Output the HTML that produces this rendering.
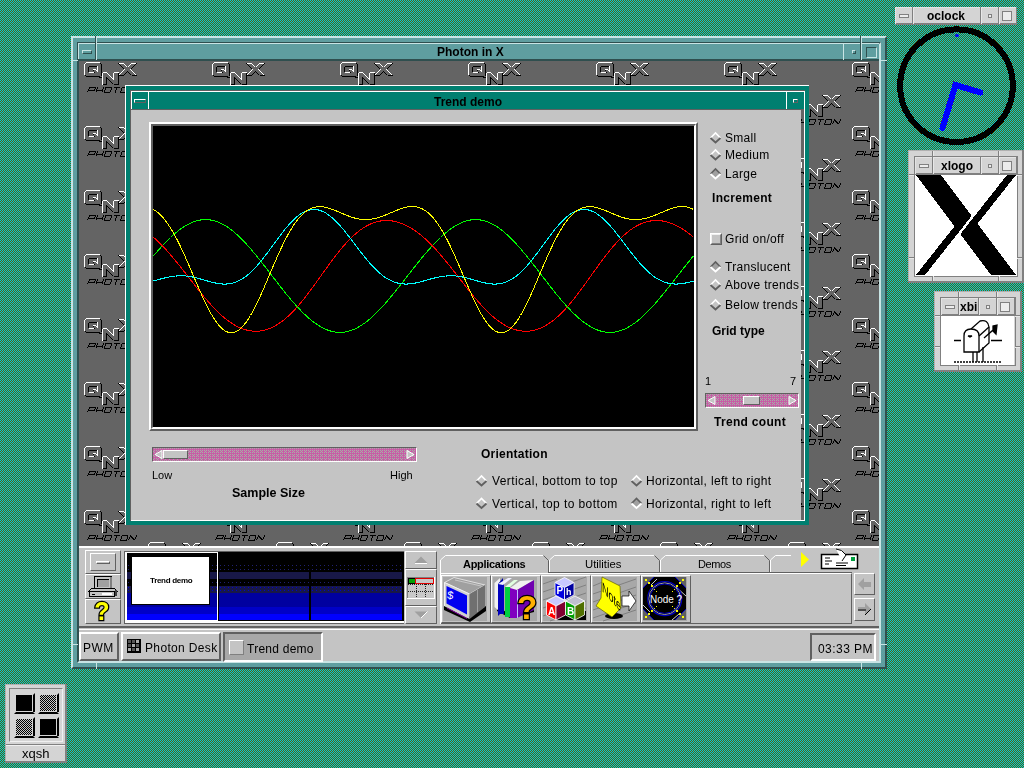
<!DOCTYPE html><html><head><meta charset="utf-8"><style>
html,body{margin:0;padding:0;}
body{width:1024px;height:768px;overflow:hidden;position:relative;
background:repeating-conic-gradient(#586010 0 25%, #00ccdc 0 50%) 0 0/2px 2px;
font-family:"Liberation Sans",sans-serif;}
.a{position:absolute;box-sizing:content-box;}
.t{white-space:nowrap;line-height:1;color:#000;will-change:transform;}
.b{font-weight:bold;}
svg{position:absolute;overflow:visible;}
</style></head><body>
<div class="a" style="left:71px;top:36px;width:812px;height:629px;border:2px solid;border-color:#c8e4e4 #2f4f4f #2f4f4f #c8e4e4;background:#5f9ea0;"></div>
<div class="a" style="left:77px;top:42px;width:800px;height:617px;border:2px solid;border-color:#2f4f4f #c8e4e4 #c8e4e4 #2f4f4f;"></div>
<div class="a" style="left:79px;top:44px;width:800px;height:15px;background:#5f9ea0;"></div>
<div class="a" style="left:78px;top:43px;width:801px;height:1px;background:#c8e4e4;"></div>
<div class="a" style="left:78px;top:43px;width:1px;height:17px;background:#c8e4e4;"></div>
<div class="a" style="left:78px;top:59px;width:801px;height:2px;background:#2f4f4f;"></div>
<div class="a" style="left:95px;top:36px;width:1px;height:24px;background:#2f4f4f;"></div>
<div class="a" style="left:96px;top:36px;width:1px;height:24px;background:#c8e4e4;"></div>
<div class="a" style="left:82px;top:50px;width:10px;height:4px;box-sizing:border-box;border:1px solid;border-color:#c8e4e4 #2f4f4f #2f4f4f #c8e4e4;"></div>
<div class="a" style="left:843px;top:43px;width:1px;height:17px;background:#c8e4e4;"></div>
<div class="a" style="left:860px;top:36px;width:1px;height:24px;background:#2f4f4f;"></div>
<div class="a" style="left:861px;top:36px;width:1px;height:24px;background:#c8e4e4;"></div>
<div class="a" style="left:852px;top:50px;width:4px;height:4px;box-sizing:border-box;border:1px solid;border-color:#c8e4e4 #2f4f4f #2f4f4f #c8e4e4;"></div>
<div class="a" style="left:866px;top:47px;width:11px;height:11px;box-sizing:border-box;border:1px solid;border-color:#2f4f4f #c8e4e4 #c8e4e4 #2f4f4f;"></div>
<div class="a" style="left:71px;top:60px;width:7px;height:1px;background:#c8e4e4;"></div>
<div class="a" style="left:879px;top:60px;width:8px;height:1px;background:#c8e4e4;"></div>
<div class="a" style="left:71px;top:644px;width:7px;height:1px;background:#c8e4e4;"></div>
<div class="a" style="left:879px;top:644px;width:8px;height:1px;background:#c8e4e4;"></div>
<div class="a" style="left:96px;top:662px;width:1px;height:7px;background:#c8e4e4;"></div>
<div class="a" style="left:861px;top:662px;width:1px;height:7px;background:#c8e4e4;"></div>
<div class="a t" style="left:437px;top:46px;font-size:12px;font-weight:bold;">Photon in X</div>
<svg width="1024" height="768" style="left:0;top:0"><defs><pattern id="qnx" x="79" y="61" width="128" height="64" patternUnits="userSpaceOnUse"><rect width="128" height="64" fill="#646464"/><g shape-rendering="crispEdges" stroke-width="1"><rect x="7" y="1" width="14" height="1" fill="#ffffff"/><rect x="6" y="2" width="1" height="1" fill="#ffffff"/><rect x="5" y="3" width="1" height="11" fill="#ffffff"/><rect x="21" y="2" width="1" height="1" fill="#000000"/><rect x="22" y="3" width="1" height="12" fill="#000000"/><rect x="7" y="15" width="14" height="1" fill="#000000"/><rect x="6" y="14" width="1" height="1" fill="#000000"/><rect x="20" y="16" width="3" height="1" fill="#000000"/><rect x="10" y="5" width="8" height="1" fill="#000000"/><rect x="9" y="6" width="1" height="5" fill="#000000"/><rect x="10" y="11" width="5" height="1" fill="#ffffff"/><rect x="18" y="5" width="1" height="6" fill="#ffffff"/><rect x="14" y="8" width="3" height="1" fill="#ffffff"/><rect x="17" y="9" width="1" height="1" fill="#ffffff"/><rect x="18" y="10" width="1" height="1" fill="#ffffff"/><rect x="14" y="9" width="1" height="1" fill="#000000"/><rect x="15" y="11" width="1" height="1" fill="#000000"/><line x1="23.5" y1="11.5" x2="27.5" y2="11.5" stroke="#ffffff"/><line x1="27.5" y1="11.5" x2="34.5" y2="18.5" stroke="#ffffff"/><line x1="34.5" y1="18.5" x2="34.5" y2="11.5" stroke="#ffffff"/><line x1="34.5" y1="11.5" x2="39.5" y2="11.5" stroke="#ffffff"/><line x1="39.5" y1="11.5" x2="39.5" y2="23.5" stroke="#000000"/><line x1="39.5" y1="23.5" x2="34.5" y2="23.5" stroke="#000000"/><line x1="34.5" y1="23.5" x2="27.5" y2="16.5" stroke="#000000"/><line x1="27.5" y1="16.5" x2="27.5" y2="23.5" stroke="#000000"/><line x1="27.5" y1="23.5" x2="23.5" y2="23.5" stroke="#000000"/><line x1="23.5" y1="23.5" x2="23.5" y2="11.5" stroke="#ffffff"/><line x1="39.5" y1="2.5" x2="44.5" y2="2.5" stroke="#ffffff"/><line x1="44.5" y1="2.5" x2="48.5" y2="6.5" stroke="#ffffff"/><line x1="48.5" y1="6.5" x2="52.5" y2="2.5" stroke="#ffffff"/><line x1="52.5" y1="2.5" x2="57.5" y2="2.5" stroke="#ffffff"/><line x1="57.5" y1="2.5" x2="51.5" y2="8.5" stroke="#000000"/><line x1="51.5" y1="8.5" x2="57.5" y2="14.5" stroke="#ffffff"/><line x1="57.5" y1="14.5" x2="52.5" y2="14.5" stroke="#000000"/><line x1="52.5" y1="14.5" x2="48.5" y2="10.5" stroke="#000000"/><line x1="48.5" y1="10.5" x2="44.5" y2="14.5" stroke="#000000"/><line x1="44.5" y1="14.5" x2="39.5" y2="14.5" stroke="#000000"/><line x1="39.5" y1="14.5" x2="45.5" y2="8.5" stroke="#ffffff"/><line x1="45.5" y1="8.5" x2="39.5" y2="2.5" stroke="#000000"/><path d="M10.50,26.50L16.50,26.50M16.50,26.50L15.30,29.50M9.30,29.50L15.30,29.50M10.50,26.50L8.50,31.50M18.70,26.50L16.70,31.50M24.70,26.50L22.70,31.50M17.50,29.50L23.50,29.50M26.90,26.50L32.90,26.50M32.90,26.50L30.90,31.50M24.90,31.50L30.90,31.50M26.90,26.50L24.90,31.50M35.10,26.50L41.10,26.50M38.10,26.50L36.10,31.50M43.30,26.50L49.30,26.50M49.30,26.50L47.30,31.50M41.30,31.50L47.30,31.50M43.30,26.50L41.30,31.50M51.50,26.50L49.50,31.50M57.50,26.50L55.50,31.50M51.50,26.50L55.50,31.50" stroke="#000" stroke-width="1" fill="none"/><rect x="71" y="33" width="14" height="1" fill="#ffffff"/><rect x="70" y="34" width="1" height="1" fill="#ffffff"/><rect x="69" y="35" width="1" height="11" fill="#ffffff"/><rect x="85" y="34" width="1" height="1" fill="#000000"/><rect x="86" y="35" width="1" height="12" fill="#000000"/><rect x="71" y="47" width="14" height="1" fill="#000000"/><rect x="70" y="46" width="1" height="1" fill="#000000"/><rect x="84" y="48" width="3" height="1" fill="#000000"/><rect x="74" y="37" width="8" height="1" fill="#000000"/><rect x="73" y="38" width="1" height="5" fill="#000000"/><rect x="74" y="43" width="5" height="1" fill="#ffffff"/><rect x="82" y="37" width="1" height="6" fill="#ffffff"/><rect x="78" y="40" width="3" height="1" fill="#ffffff"/><rect x="81" y="41" width="1" height="1" fill="#ffffff"/><rect x="82" y="42" width="1" height="1" fill="#ffffff"/><rect x="78" y="41" width="1" height="1" fill="#000000"/><rect x="79" y="43" width="1" height="1" fill="#000000"/><line x1="87.5" y1="43.5" x2="91.5" y2="43.5" stroke="#ffffff"/><line x1="91.5" y1="43.5" x2="98.5" y2="50.5" stroke="#ffffff"/><line x1="98.5" y1="50.5" x2="98.5" y2="43.5" stroke="#ffffff"/><line x1="98.5" y1="43.5" x2="103.5" y2="43.5" stroke="#ffffff"/><line x1="103.5" y1="43.5" x2="103.5" y2="55.5" stroke="#000000"/><line x1="103.5" y1="55.5" x2="98.5" y2="55.5" stroke="#000000"/><line x1="98.5" y1="55.5" x2="91.5" y2="48.5" stroke="#000000"/><line x1="91.5" y1="48.5" x2="91.5" y2="55.5" stroke="#000000"/><line x1="91.5" y1="55.5" x2="87.5" y2="55.5" stroke="#000000"/><line x1="87.5" y1="55.5" x2="87.5" y2="43.5" stroke="#ffffff"/><line x1="103.5" y1="34.5" x2="108.5" y2="34.5" stroke="#ffffff"/><line x1="108.5" y1="34.5" x2="112.5" y2="38.5" stroke="#ffffff"/><line x1="112.5" y1="38.5" x2="116.5" y2="34.5" stroke="#ffffff"/><line x1="116.5" y1="34.5" x2="121.5" y2="34.5" stroke="#ffffff"/><line x1="121.5" y1="34.5" x2="115.5" y2="40.5" stroke="#000000"/><line x1="115.5" y1="40.5" x2="121.5" y2="46.5" stroke="#ffffff"/><line x1="121.5" y1="46.5" x2="116.5" y2="46.5" stroke="#000000"/><line x1="116.5" y1="46.5" x2="112.5" y2="42.5" stroke="#000000"/><line x1="112.5" y1="42.5" x2="108.5" y2="46.5" stroke="#000000"/><line x1="108.5" y1="46.5" x2="103.5" y2="46.5" stroke="#000000"/><line x1="103.5" y1="46.5" x2="109.5" y2="40.5" stroke="#ffffff"/><line x1="109.5" y1="40.5" x2="103.5" y2="34.5" stroke="#000000"/><path d="M74.50,58.50L80.50,58.50M80.50,58.50L79.30,61.50M73.30,61.50L79.30,61.50M74.50,58.50L72.50,63.50M82.70,58.50L80.70,63.50M88.70,58.50L86.70,63.50M81.50,61.50L87.50,61.50M90.90,58.50L96.90,58.50M96.90,58.50L94.90,63.50M88.90,63.50L94.90,63.50M90.90,58.50L88.90,63.50M99.10,58.50L105.10,58.50M102.10,58.50L100.10,63.50M107.30,58.50L113.30,58.50M113.30,58.50L111.30,63.50M105.30,63.50L111.30,63.50M107.30,58.50L105.30,63.50M115.50,58.50L113.50,63.50M121.50,58.50L119.50,63.50M115.50,58.50L119.50,63.50" stroke="#000" stroke-width="1" fill="none"/><rect x="-57" y="33" width="14" height="1" fill="#ffffff"/><rect x="-58" y="34" width="1" height="1" fill="#ffffff"/><rect x="-59" y="35" width="1" height="11" fill="#ffffff"/><rect x="-43" y="34" width="1" height="1" fill="#000000"/><rect x="-42" y="35" width="1" height="12" fill="#000000"/><rect x="-57" y="47" width="14" height="1" fill="#000000"/><rect x="-58" y="46" width="1" height="1" fill="#000000"/><rect x="-44" y="48" width="3" height="1" fill="#000000"/><rect x="-54" y="37" width="8" height="1" fill="#000000"/><rect x="-55" y="38" width="1" height="5" fill="#000000"/><rect x="-54" y="43" width="5" height="1" fill="#ffffff"/><rect x="-46" y="37" width="1" height="6" fill="#ffffff"/><rect x="-50" y="40" width="3" height="1" fill="#ffffff"/><rect x="-47" y="41" width="1" height="1" fill="#ffffff"/><rect x="-46" y="42" width="1" height="1" fill="#ffffff"/><rect x="-50" y="41" width="1" height="1" fill="#000000"/><rect x="-49" y="43" width="1" height="1" fill="#000000"/><line x1="-40.5" y1="43.5" x2="-36.5" y2="43.5" stroke="#ffffff"/><line x1="-36.5" y1="43.5" x2="-29.5" y2="50.5" stroke="#ffffff"/><line x1="-29.5" y1="50.5" x2="-29.5" y2="43.5" stroke="#ffffff"/><line x1="-29.5" y1="43.5" x2="-24.5" y2="43.5" stroke="#ffffff"/><line x1="-24.5" y1="43.5" x2="-24.5" y2="55.5" stroke="#000000"/><line x1="-24.5" y1="55.5" x2="-29.5" y2="55.5" stroke="#000000"/><line x1="-29.5" y1="55.5" x2="-36.5" y2="48.5" stroke="#000000"/><line x1="-36.5" y1="48.5" x2="-36.5" y2="55.5" stroke="#000000"/><line x1="-36.5" y1="55.5" x2="-40.5" y2="55.5" stroke="#000000"/><line x1="-40.5" y1="55.5" x2="-40.5" y2="43.5" stroke="#ffffff"/><line x1="-24.5" y1="34.5" x2="-19.5" y2="34.5" stroke="#ffffff"/><line x1="-19.5" y1="34.5" x2="-15.5" y2="38.5" stroke="#ffffff"/><line x1="-15.5" y1="38.5" x2="-11.5" y2="34.5" stroke="#ffffff"/><line x1="-11.5" y1="34.5" x2="-6.5" y2="34.5" stroke="#ffffff"/><line x1="-6.5" y1="34.5" x2="-12.5" y2="40.5" stroke="#000000"/><line x1="-12.5" y1="40.5" x2="-6.5" y2="46.5" stroke="#ffffff"/><line x1="-6.5" y1="46.5" x2="-11.5" y2="46.5" stroke="#000000"/><line x1="-11.5" y1="46.5" x2="-15.5" y2="42.5" stroke="#000000"/><line x1="-15.5" y1="42.5" x2="-19.5" y2="46.5" stroke="#000000"/><line x1="-19.5" y1="46.5" x2="-24.5" y2="46.5" stroke="#000000"/><line x1="-24.5" y1="46.5" x2="-18.5" y2="40.5" stroke="#ffffff"/><line x1="-18.5" y1="40.5" x2="-24.5" y2="34.5" stroke="#000000"/><path d="M-53.50,58.50L-47.50,58.50M-47.50,58.50L-48.70,61.50M-54.70,61.50L-48.70,61.50M-53.50,58.50L-55.50,63.50M-45.30,58.50L-47.30,63.50M-39.30,58.50L-41.30,63.50M-46.50,61.50L-40.50,61.50M-37.10,58.50L-31.10,58.50M-31.10,58.50L-33.10,63.50M-39.10,63.50L-33.10,63.50M-37.10,58.50L-39.10,63.50M-28.90,58.50L-22.90,58.50M-25.90,58.50L-27.90,63.50M-20.70,58.50L-14.70,58.50M-14.70,58.50L-16.70,63.50M-22.70,63.50L-16.70,63.50M-20.70,58.50L-22.70,63.50M-12.50,58.50L-14.50,63.50M-6.50,58.50L-8.50,63.50M-12.50,58.50L-8.50,63.50" stroke="#000" stroke-width="1" fill="none"/><rect x="7" y="-31" width="14" height="1" fill="#ffffff"/><rect x="6" y="-30" width="1" height="1" fill="#ffffff"/><rect x="5" y="-29" width="1" height="11" fill="#ffffff"/><rect x="21" y="-30" width="1" height="1" fill="#000000"/><rect x="22" y="-29" width="1" height="12" fill="#000000"/><rect x="7" y="-17" width="14" height="1" fill="#000000"/><rect x="6" y="-18" width="1" height="1" fill="#000000"/><rect x="20" y="-16" width="3" height="1" fill="#000000"/><rect x="10" y="-27" width="8" height="1" fill="#000000"/><rect x="9" y="-26" width="1" height="5" fill="#000000"/><rect x="10" y="-21" width="5" height="1" fill="#ffffff"/><rect x="18" y="-27" width="1" height="6" fill="#ffffff"/><rect x="14" y="-24" width="3" height="1" fill="#ffffff"/><rect x="17" y="-23" width="1" height="1" fill="#ffffff"/><rect x="18" y="-22" width="1" height="1" fill="#ffffff"/><rect x="14" y="-23" width="1" height="1" fill="#000000"/><rect x="15" y="-21" width="1" height="1" fill="#000000"/><line x1="23.5" y1="-20.5" x2="27.5" y2="-20.5" stroke="#ffffff"/><line x1="27.5" y1="-20.5" x2="34.5" y2="-13.5" stroke="#ffffff"/><line x1="34.5" y1="-13.5" x2="34.5" y2="-20.5" stroke="#ffffff"/><line x1="34.5" y1="-20.5" x2="39.5" y2="-20.5" stroke="#ffffff"/><line x1="39.5" y1="-20.5" x2="39.5" y2="-8.5" stroke="#000000"/><line x1="39.5" y1="-8.5" x2="34.5" y2="-8.5" stroke="#000000"/><line x1="34.5" y1="-8.5" x2="27.5" y2="-15.5" stroke="#000000"/><line x1="27.5" y1="-15.5" x2="27.5" y2="-8.5" stroke="#000000"/><line x1="27.5" y1="-8.5" x2="23.5" y2="-8.5" stroke="#000000"/><line x1="23.5" y1="-8.5" x2="23.5" y2="-20.5" stroke="#ffffff"/><line x1="39.5" y1="-29.5" x2="44.5" y2="-29.5" stroke="#ffffff"/><line x1="44.5" y1="-29.5" x2="48.5" y2="-25.5" stroke="#ffffff"/><line x1="48.5" y1="-25.5" x2="52.5" y2="-29.5" stroke="#ffffff"/><line x1="52.5" y1="-29.5" x2="57.5" y2="-29.5" stroke="#ffffff"/><line x1="57.5" y1="-29.5" x2="51.5" y2="-23.5" stroke="#000000"/><line x1="51.5" y1="-23.5" x2="57.5" y2="-17.5" stroke="#ffffff"/><line x1="57.5" y1="-17.5" x2="52.5" y2="-17.5" stroke="#000000"/><line x1="52.5" y1="-17.5" x2="48.5" y2="-21.5" stroke="#000000"/><line x1="48.5" y1="-21.5" x2="44.5" y2="-17.5" stroke="#000000"/><line x1="44.5" y1="-17.5" x2="39.5" y2="-17.5" stroke="#000000"/><line x1="39.5" y1="-17.5" x2="45.5" y2="-23.5" stroke="#ffffff"/><line x1="45.5" y1="-23.5" x2="39.5" y2="-29.5" stroke="#000000"/><path d="M10.50,-5.50L16.50,-5.50M16.50,-5.50L15.30,-2.50M9.30,-2.50L15.30,-2.50M10.50,-5.50L8.50,-0.50M18.70,-5.50L16.70,-0.50M24.70,-5.50L22.70,-0.50M17.50,-2.50L23.50,-2.50M26.90,-5.50L32.90,-5.50M32.90,-5.50L30.90,-0.50M24.90,-0.50L30.90,-0.50M26.90,-5.50L24.90,-0.50M35.10,-5.50L41.10,-5.50M38.10,-5.50L36.10,-0.50M43.30,-5.50L49.30,-5.50M49.30,-5.50L47.30,-0.50M41.30,-0.50L47.30,-0.50M43.30,-5.50L41.30,-0.50M51.50,-5.50L49.50,-0.50M57.50,-5.50L55.50,-0.50M51.50,-5.50L55.50,-0.50" stroke="#000" stroke-width="1" fill="none"/><rect x="71" y="-31" width="14" height="1" fill="#ffffff"/><rect x="70" y="-30" width="1" height="1" fill="#ffffff"/><rect x="69" y="-29" width="1" height="11" fill="#ffffff"/><rect x="85" y="-30" width="1" height="1" fill="#000000"/><rect x="86" y="-29" width="1" height="12" fill="#000000"/><rect x="71" y="-17" width="14" height="1" fill="#000000"/><rect x="70" y="-18" width="1" height="1" fill="#000000"/><rect x="84" y="-16" width="3" height="1" fill="#000000"/><rect x="74" y="-27" width="8" height="1" fill="#000000"/><rect x="73" y="-26" width="1" height="5" fill="#000000"/><rect x="74" y="-21" width="5" height="1" fill="#ffffff"/><rect x="82" y="-27" width="1" height="6" fill="#ffffff"/><rect x="78" y="-24" width="3" height="1" fill="#ffffff"/><rect x="81" y="-23" width="1" height="1" fill="#ffffff"/><rect x="82" y="-22" width="1" height="1" fill="#ffffff"/><rect x="78" y="-23" width="1" height="1" fill="#000000"/><rect x="79" y="-21" width="1" height="1" fill="#000000"/><line x1="87.5" y1="-20.5" x2="91.5" y2="-20.5" stroke="#ffffff"/><line x1="91.5" y1="-20.5" x2="98.5" y2="-13.5" stroke="#ffffff"/><line x1="98.5" y1="-13.5" x2="98.5" y2="-20.5" stroke="#ffffff"/><line x1="98.5" y1="-20.5" x2="103.5" y2="-20.5" stroke="#ffffff"/><line x1="103.5" y1="-20.5" x2="103.5" y2="-8.5" stroke="#000000"/><line x1="103.5" y1="-8.5" x2="98.5" y2="-8.5" stroke="#000000"/><line x1="98.5" y1="-8.5" x2="91.5" y2="-15.5" stroke="#000000"/><line x1="91.5" y1="-15.5" x2="91.5" y2="-8.5" stroke="#000000"/><line x1="91.5" y1="-8.5" x2="87.5" y2="-8.5" stroke="#000000"/><line x1="87.5" y1="-8.5" x2="87.5" y2="-20.5" stroke="#ffffff"/><line x1="103.5" y1="-29.5" x2="108.5" y2="-29.5" stroke="#ffffff"/><line x1="108.5" y1="-29.5" x2="112.5" y2="-25.5" stroke="#ffffff"/><line x1="112.5" y1="-25.5" x2="116.5" y2="-29.5" stroke="#ffffff"/><line x1="116.5" y1="-29.5" x2="121.5" y2="-29.5" stroke="#ffffff"/><line x1="121.5" y1="-29.5" x2="115.5" y2="-23.5" stroke="#000000"/><line x1="115.5" y1="-23.5" x2="121.5" y2="-17.5" stroke="#ffffff"/><line x1="121.5" y1="-17.5" x2="116.5" y2="-17.5" stroke="#000000"/><line x1="116.5" y1="-17.5" x2="112.5" y2="-21.5" stroke="#000000"/><line x1="112.5" y1="-21.5" x2="108.5" y2="-17.5" stroke="#000000"/><line x1="108.5" y1="-17.5" x2="103.5" y2="-17.5" stroke="#000000"/><line x1="103.5" y1="-17.5" x2="109.5" y2="-23.5" stroke="#ffffff"/><line x1="109.5" y1="-23.5" x2="103.5" y2="-29.5" stroke="#000000"/><path d="M74.50,-5.50L80.50,-5.50M80.50,-5.50L79.30,-2.50M73.30,-2.50L79.30,-2.50M74.50,-5.50L72.50,-0.50M82.70,-5.50L80.70,-0.50M88.70,-5.50L86.70,-0.50M81.50,-2.50L87.50,-2.50M90.90,-5.50L96.90,-5.50M96.90,-5.50L94.90,-0.50M88.90,-0.50L94.90,-0.50M90.90,-5.50L88.90,-0.50M99.10,-5.50L105.10,-5.50M102.10,-5.50L100.10,-0.50M107.30,-5.50L113.30,-5.50M113.30,-5.50L111.30,-0.50M105.30,-0.50L111.30,-0.50M107.30,-5.50L105.30,-0.50M115.50,-5.50L113.50,-0.50M121.50,-5.50L119.50,-0.50M115.50,-5.50L119.50,-0.50" stroke="#000" stroke-width="1" fill="none"/></g></pattern></defs><rect x="79" y="61" width="800" height="600" fill="url(#qnx)"/></svg>
<div class="a" style="left:125px;top:85px;width:684px;height:440px;background:#007f70;"></div>
<div class="a" style="left:125px;top:85px;width:684px;height:1px;background:#fff;"></div>
<div class="a" style="left:125px;top:85px;width:1px;height:440px;background:#fff;"></div>
<div class="a" style="left:131px;top:91px;width:674px;height:1px;background:#fff;"></div>
<div class="a" style="left:131px;top:91px;width:1px;height:18px;background:#fff;"></div>
<div class="a" style="left:148px;top:91px;width:1px;height:18px;background:#fff;"></div>
<div class="a" style="left:130px;top:90px;width:675px;height:1px;background:#606060;"></div>
<div class="a" style="left:130px;top:90px;width:1px;height:431px;background:#606060;"></div>
<div class="a" style="left:786px;top:91px;width:1px;height:18px;background:#fff;"></div>
<div class="a" style="left:131px;top:109px;width:673px;height:1px;background:#606060;"></div>
<div class="a" style="left:134px;top:99px;width:12px;height:4px;box-sizing:border-box;border:1px solid;border-color:#fff #606060 #606060 #fff;"></div>
<div class="a" style="left:793px;top:99px;width:5px;height:4px;box-sizing:border-box;border:1px solid;border-color:#fff #606060 #606060 #fff;"></div>
<div class="a t" style="left:434px;top:96px;font-size:12px;font-weight:bold;color:#000;">Trend demo</div>
<div class="a" style="left:131px;top:110px;width:670px;height:410px;background:#c4c4c4;"></div>
<div class="a" style="left:804px;top:91px;width:1px;height:430px;background:#fff;"></div>
<div class="a" style="left:131px;top:520px;width:674px;height:1px;background:#fff;"></div>
<svg width="1024" height="768" style="left:0;top:0"><rect x="801" y="110" width="3" height="410" fill="url(#qnx)"/></svg>
<div class="a" style="left:149px;top:122px;width:549px;height:309px;box-sizing:border-box;border:2px solid;border-color:#fff #606060 #606060 #fff;"></div>
<div class="a" style="left:151px;top:124px;width:545px;height:305px;box-sizing:border-box;border:2px solid;border-color:#606060 #fff #fff #606060;background:#000;"></div>
<svg width="1024" height="768" style="left:0;top:0"><defs><clipPath id="pc"><rect x="153" y="126" width="541" height="301"/></clipPath></defs><g clip-path="url(#pc)"><polyline points="153.5,255.9 154.5,254.7 155.5,253.5 156.5,252.4 157.5,251.2 158.5,250.1 159.5,248.9 160.5,247.8 161.5,246.7 162.5,245.6 163.5,244.5 164.5,243.5 165.5,242.4 166.5,241.4 167.5,240.4 168.5,239.4 169.5,238.4 170.5,237.5 171.5,236.5 172.5,235.6 173.5,234.7 174.5,233.8 175.5,233.0 176.5,232.2 177.5,231.4 178.5,230.6 179.5,229.8 180.5,229.1 181.5,228.4 182.5,227.7 183.5,227.0 184.5,226.4 185.5,225.8 186.5,225.2 187.5,224.6 188.5,224.1 189.5,223.6 190.5,223.1 191.5,222.7 192.5,222.3 193.5,221.9 194.5,221.5 195.5,221.2 196.5,220.9 197.5,220.6 198.5,220.4 199.5,220.2 200.5,220.0 201.5,219.9 202.5,219.8 203.5,219.7 204.5,219.6 205.5,219.6 206.5,219.6 207.5,219.7 208.5,219.7 209.5,219.8 210.5,220.0 211.5,220.2 212.5,220.4 213.5,220.6 214.5,220.9 215.5,221.2 216.5,221.5 217.5,221.9 218.5,222.2 219.5,222.7 220.5,223.1 221.5,223.6 222.5,224.1 223.5,224.7 224.5,225.2 225.5,225.8 226.5,226.4 227.5,227.1 228.5,227.8 229.5,228.5 230.5,229.2 231.5,230.0 232.5,230.8 233.5,231.6 234.5,232.4 235.5,233.3 236.5,234.2 237.5,235.1 238.5,236.0 239.5,237.0 240.5,237.9 241.5,238.9 242.5,240.0 243.5,241.0 244.5,242.0 245.5,243.1 246.5,244.2 247.5,245.3 248.5,246.4 249.5,247.6 250.5,248.7 251.5,249.9 252.5,251.1 253.5,252.3 254.5,253.5 255.5,254.7 256.5,255.9 257.5,257.2 258.5,258.4 259.5,259.7 260.5,260.9 261.5,262.2 262.5,263.5 263.5,264.7 264.5,266.0 265.5,267.3 266.5,268.6 267.5,269.9 268.5,271.2 269.5,272.5 270.5,273.8 271.5,275.1 272.5,276.4 273.5,277.7 274.5,279.0 275.5,280.3 276.5,281.6 277.5,282.9 278.5,284.2 279.5,285.5 280.5,286.8 281.5,288.0 282.5,289.3 283.5,290.6 284.5,291.8 285.5,293.1 286.5,294.3 287.5,295.5 288.5,296.7 289.5,297.9 290.5,299.1 291.5,300.3 292.5,301.4 293.5,302.6 294.5,303.7 295.5,304.9 296.5,306.0 297.5,307.1 298.5,308.1 299.5,309.2 300.5,310.2 301.5,311.3 302.5,312.3 303.5,313.3 304.5,314.2 305.5,315.2 306.5,316.1 307.5,317.0 308.5,317.9 309.5,318.7 310.5,319.6 311.5,320.4 312.5,321.2 313.5,322.0 314.5,322.7 315.5,323.4 316.5,324.1 317.5,324.8 318.5,325.4 319.5,326.1 320.5,326.6 321.5,327.2 322.5,327.7 323.5,328.3 324.5,328.7 325.5,329.2 326.5,329.6 327.5,330.0 328.5,330.4 329.5,330.7 330.5,331.0 331.5,331.3 332.5,331.5 333.5,331.7 334.5,331.9 335.5,332.1 336.5,332.2 337.5,332.3 338.5,332.4 339.5,332.4 340.5,332.4 341.5,332.3 342.5,332.3 343.5,332.2 344.5,332.1 345.5,331.9 346.5,331.7 347.5,331.5 348.5,331.2 349.5,331.0 350.5,330.6 351.5,330.3 352.5,329.9 353.5,329.5 354.5,329.1 355.5,328.6 356.5,328.1 357.5,327.6 358.5,327.1 359.5,326.5 360.5,325.9 361.5,325.3 362.5,324.6 363.5,323.9 364.5,323.2 365.5,322.5 366.5,321.7 367.5,320.9 368.5,320.1 369.5,319.3 370.5,318.4 371.5,317.5 372.5,316.6 373.5,315.7 374.5,314.8 375.5,313.8 376.5,312.8 377.5,311.8 378.5,310.8 379.5,309.7 380.5,308.7 381.5,307.6 382.5,306.5 383.5,305.4 384.5,304.3 385.5,303.2 386.5,302.0 387.5,300.9 388.5,299.7 389.5,298.5 390.5,297.3 391.5,296.1 392.5,294.9 393.5,293.7 394.5,292.4 395.5,291.2 396.5,289.9 397.5,288.7 398.5,287.4 399.5,286.2 400.5,284.9 401.5,283.6 402.5,282.3 403.5,281.1 404.5,279.8 405.5,278.5 406.5,277.2 407.5,275.9 408.5,274.6 409.5,273.4 410.5,272.1 411.5,270.8 412.5,269.5 413.5,268.3 414.5,267.0 415.5,265.7 416.5,264.5 417.5,263.2 418.5,262.0 419.5,260.8 420.5,259.5 421.5,258.3 422.5,257.1 423.5,255.9 424.5,254.7 425.5,253.5 426.5,252.4 427.5,251.2 428.5,250.1 429.5,248.9 430.5,247.8 431.5,246.7 432.5,245.6 433.5,244.5 434.5,243.5 435.5,242.4 436.5,241.4 437.5,240.4 438.5,239.4 439.5,238.4 440.5,237.5 441.5,236.5 442.5,235.6 443.5,234.7 444.5,233.8 445.5,233.0 446.5,232.2 447.5,231.4 448.5,230.6 449.5,229.8 450.5,229.1 451.5,228.4 452.5,227.7 453.5,227.0 454.5,226.4 455.5,225.8 456.5,225.2 457.5,224.6 458.5,224.1 459.5,223.6 460.5,223.1 461.5,222.7 462.5,222.3 463.5,221.9 464.5,221.5 465.5,221.2 466.5,220.9 467.5,220.6 468.5,220.4 469.5,220.2 470.5,220.0 471.5,219.9 472.5,219.8 473.5,219.7 474.5,219.6 475.5,219.6 476.5,219.6 477.5,219.7 478.5,219.7 479.5,219.8 480.5,220.0 481.5,220.2 482.5,220.4 483.5,220.6 484.5,220.9 485.5,221.2 486.5,221.5 487.5,221.9 488.5,222.2 489.5,222.7 490.5,223.1 491.5,223.6 492.5,224.1 493.5,224.7 494.5,225.2 495.5,225.8 496.5,226.4 497.5,227.1 498.5,227.8 499.5,228.5 500.5,229.2 501.5,230.0 502.5,230.8 503.5,231.6 504.5,232.4 505.5,233.3 506.5,234.2 507.5,235.1 508.5,236.0 509.5,237.0 510.5,237.9 511.5,238.9 512.5,240.0 513.5,241.0 514.5,242.0 515.5,243.1 516.5,244.2 517.5,245.3 518.5,246.4 519.5,247.6 520.5,248.7 521.5,249.9 522.5,251.1 523.5,252.3 524.5,253.5 525.5,254.7 526.5,255.9 527.5,257.2 528.5,258.4 529.5,259.7 530.5,260.9 531.5,262.2 532.5,263.5 533.5,264.7 534.5,266.0 535.5,267.3 536.5,268.6 537.5,269.9 538.5,271.2 539.5,272.5 540.5,273.8 541.5,275.1 542.5,276.4 543.5,277.7 544.5,279.0 545.5,280.3 546.5,281.6 547.5,282.9 548.5,284.2 549.5,285.5 550.5,286.8 551.5,288.0 552.5,289.3 553.5,290.6 554.5,291.8 555.5,293.1 556.5,294.3 557.5,295.5 558.5,296.7 559.5,297.9 560.5,299.1 561.5,300.3 562.5,301.4 563.5,302.6 564.5,303.7 565.5,304.9 566.5,306.0 567.5,307.1 568.5,308.1 569.5,309.2 570.5,310.2 571.5,311.3 572.5,312.3 573.5,313.3 574.5,314.2 575.5,315.2 576.5,316.1 577.5,317.0 578.5,317.9 579.5,318.7 580.5,319.6 581.5,320.4 582.5,321.2 583.5,322.0 584.5,322.7 585.5,323.4 586.5,324.1 587.5,324.8 588.5,325.4 589.5,326.1 590.5,326.6 591.5,327.2 592.5,327.7 593.5,328.3 594.5,328.7 595.5,329.2 596.5,329.6 597.5,330.0 598.5,330.4 599.5,330.7 600.5,331.0 601.5,331.3 602.5,331.5 603.5,331.7 604.5,331.9 605.5,332.1 606.5,332.2 607.5,332.3 608.5,332.4 609.5,332.4 610.5,332.4 611.5,332.3 612.5,332.3 613.5,332.2 614.5,332.1 615.5,331.9 616.5,331.7 617.5,331.5 618.5,331.2 619.5,331.0 620.5,330.6 621.5,330.3 622.5,329.9 623.5,329.5 624.5,329.1 625.5,328.6 626.5,328.1 627.5,327.6 628.5,327.1 629.5,326.5 630.5,325.9 631.5,325.3 632.5,324.6 633.5,323.9 634.5,323.2 635.5,322.5 636.5,321.7 637.5,320.9 638.5,320.1 639.5,319.3 640.5,318.4 641.5,317.5 642.5,316.6 643.5,315.7 644.5,314.8 645.5,313.8 646.5,312.8 647.5,311.8 648.5,310.8 649.5,309.7 650.5,308.7 651.5,307.6 652.5,306.5 653.5,305.4 654.5,304.3 655.5,303.2 656.5,302.0 657.5,300.9 658.5,299.7 659.5,298.5 660.5,297.3 661.5,296.1 662.5,294.9 663.5,293.7 664.5,292.4 665.5,291.2 666.5,289.9 667.5,288.7 668.5,287.4 669.5,286.2 670.5,284.9 671.5,283.6 672.5,282.3 673.5,281.1 674.5,279.8 675.5,278.5 676.5,277.2 677.5,275.9 678.5,274.6 679.5,273.4 680.5,272.1 681.5,270.8 682.5,269.5 683.5,268.3 684.5,267.0 685.5,265.7 686.5,264.5 687.5,263.2 688.5,262.0 689.5,260.8 690.5,259.5 691.5,258.3 692.5,257.1 693.5,255.9" fill="none" stroke="#00ff00" stroke-width="1" shape-rendering="crispEdges"/><polyline points="153.5,237.3 154.5,238.2 155.5,239.1 156.5,240.0 157.5,241.0 158.5,241.9 159.5,242.9 160.5,243.9 161.5,244.9 162.5,245.9 163.5,247.0 164.5,248.1 165.5,249.1 166.5,250.2 167.5,251.3 168.5,252.5 169.5,253.6 170.5,254.8 171.5,255.9 172.5,257.1 173.5,258.3 174.5,259.5 175.5,260.7 176.5,262.0 177.5,263.2 178.5,264.4 179.5,265.7 180.5,266.9 181.5,268.2 182.5,269.5 183.5,270.8 184.5,272.0 185.5,273.3 186.5,274.6 187.5,275.9 188.5,277.2 189.5,278.5 190.5,279.8 191.5,281.0 192.5,282.3 193.5,283.6 194.5,284.9 195.5,286.2 196.5,287.4 197.5,288.7 198.5,290.0 199.5,291.2 200.5,292.4 201.5,293.7 202.5,294.9 203.5,296.1 204.5,297.3 205.5,298.5 206.5,299.7 207.5,300.8 208.5,302.0 209.5,303.1 210.5,304.2 211.5,305.3 212.5,306.4 213.5,307.5 214.5,308.5 215.5,309.5 216.5,310.5 217.5,311.5 218.5,312.5 219.5,313.5 220.5,314.4 221.5,315.3 222.5,316.2 223.5,317.0 224.5,317.9 225.5,318.7 226.5,319.5 227.5,320.3 228.5,321.0 229.5,321.7 230.5,322.4 231.5,323.1 232.5,323.7 233.5,324.4 234.5,325.0 235.5,325.5 236.5,326.1 237.5,326.6 238.5,327.1 239.5,327.5 240.5,328.0 241.5,328.4 242.5,328.8 243.5,329.1 244.5,329.5 245.5,329.8 246.5,330.0 247.5,330.3 248.5,330.5 249.5,330.7 250.5,330.9 251.5,331.0 252.5,331.1 253.5,331.2 254.5,331.2 255.5,331.3 256.5,331.2 257.5,331.2 258.5,331.1 259.5,331.1 260.5,330.9 261.5,330.8 262.5,330.6 263.5,330.4 264.5,330.2 265.5,329.9 266.5,329.6 267.5,329.3 268.5,328.9 269.5,328.5 270.5,328.1 271.5,327.7 272.5,327.2 273.5,326.7 274.5,326.2 275.5,325.6 276.5,325.0 277.5,324.4 278.5,323.8 279.5,323.1 280.5,322.4 281.5,321.7 282.5,321.0 283.5,320.2 284.5,319.4 285.5,318.5 286.5,317.7 287.5,316.8 288.5,315.9 289.5,314.9 290.5,314.0 291.5,313.0 292.5,312.0 293.5,310.9 294.5,309.9 295.5,308.8 296.5,307.7 297.5,306.6 298.5,305.4 299.5,304.2 300.5,303.1 301.5,301.9 302.5,300.6 303.5,299.4 304.5,298.1 305.5,296.9 306.5,295.6 307.5,294.3 308.5,292.9 309.5,291.6 310.5,290.3 311.5,288.9 312.5,287.6 313.5,286.2 314.5,284.8 315.5,283.4 316.5,282.0 317.5,280.6 318.5,279.3 319.5,277.9 320.5,276.4 321.5,275.0 322.5,273.6 323.5,272.2 324.5,270.8 325.5,269.4 326.5,268.1 327.5,266.7 328.5,265.3 329.5,263.9 330.5,262.6 331.5,261.2 332.5,259.9 333.5,258.5 334.5,257.2 335.5,255.9 336.5,254.6 337.5,253.4 338.5,252.1 339.5,250.9 340.5,249.6 341.5,248.4 342.5,247.2 343.5,246.1 344.5,244.9 345.5,243.8 346.5,242.7 347.5,241.6 348.5,240.6 349.5,239.6 350.5,238.5 351.5,237.6 352.5,236.6 353.5,235.7 354.5,234.8 355.5,233.9 356.5,233.0 357.5,232.2 358.5,231.4 359.5,230.6 360.5,229.9 361.5,229.2 362.5,228.5 363.5,227.8 364.5,227.2 365.5,226.6 366.5,226.0 367.5,225.5 368.5,225.0 369.5,224.5 370.5,224.0 371.5,223.6 372.5,223.2 373.5,222.8 374.5,222.5 375.5,222.2 376.5,221.9 377.5,221.6 378.5,221.4 379.5,221.2 380.5,221.0 381.5,220.9 382.5,220.8 383.5,220.7 384.5,220.6 385.5,220.6 386.5,220.5 387.5,220.6 388.5,220.6 389.5,220.7 390.5,220.8 391.5,220.9 392.5,221.0 393.5,221.2 394.5,221.4 395.5,221.6 396.5,221.8 397.5,222.1 398.5,222.4 399.5,222.7 400.5,223.1 401.5,223.4 402.5,223.8 403.5,224.2 404.5,224.7 405.5,225.1 406.5,225.6 407.5,226.1 408.5,226.7 409.5,227.2 410.5,227.8 411.5,228.4 412.5,229.0 413.5,229.7 414.5,230.3 415.5,231.0 416.5,231.7 417.5,232.5 418.5,233.2 419.5,234.0 420.5,234.8 421.5,235.6 422.5,236.5 423.5,237.3 424.5,238.2 425.5,239.1 426.5,240.0 427.5,241.0 428.5,241.9 429.5,242.9 430.5,243.9 431.5,244.9 432.5,245.9 433.5,247.0 434.5,248.1 435.5,249.1 436.5,250.2 437.5,251.3 438.5,252.5 439.5,253.6 440.5,254.8 441.5,255.9 442.5,257.1 443.5,258.3 444.5,259.5 445.5,260.7 446.5,262.0 447.5,263.2 448.5,264.4 449.5,265.7 450.5,266.9 451.5,268.2 452.5,269.5 453.5,270.8 454.5,272.0 455.5,273.3 456.5,274.6 457.5,275.9 458.5,277.2 459.5,278.5 460.5,279.8 461.5,281.0 462.5,282.3 463.5,283.6 464.5,284.9 465.5,286.2 466.5,287.4 467.5,288.7 468.5,290.0 469.5,291.2 470.5,292.4 471.5,293.7 472.5,294.9 473.5,296.1 474.5,297.3 475.5,298.5 476.5,299.7 477.5,300.8 478.5,302.0 479.5,303.1 480.5,304.2 481.5,305.3 482.5,306.4 483.5,307.5 484.5,308.5 485.5,309.5 486.5,310.5 487.5,311.5 488.5,312.5 489.5,313.5 490.5,314.4 491.5,315.3 492.5,316.2 493.5,317.0 494.5,317.9 495.5,318.7 496.5,319.5 497.5,320.3 498.5,321.0 499.5,321.7 500.5,322.4 501.5,323.1 502.5,323.7 503.5,324.4 504.5,325.0 505.5,325.5 506.5,326.1 507.5,326.6 508.5,327.1 509.5,327.5 510.5,328.0 511.5,328.4 512.5,328.8 513.5,329.1 514.5,329.5 515.5,329.8 516.5,330.0 517.5,330.3 518.5,330.5 519.5,330.7 520.5,330.9 521.5,331.0 522.5,331.1 523.5,331.2 524.5,331.2 525.5,331.3 526.5,331.2 527.5,331.2 528.5,331.1 529.5,331.1 530.5,330.9 531.5,330.8 532.5,330.6 533.5,330.4 534.5,330.2 535.5,329.9 536.5,329.6 537.5,329.3 538.5,328.9 539.5,328.5 540.5,328.1 541.5,327.7 542.5,327.2 543.5,326.7 544.5,326.2 545.5,325.6 546.5,325.0 547.5,324.4 548.5,323.8 549.5,323.1 550.5,322.4 551.5,321.7 552.5,321.0 553.5,320.2 554.5,319.4 555.5,318.5 556.5,317.7 557.5,316.8 558.5,315.9 559.5,314.9 560.5,314.0 561.5,313.0 562.5,312.0 563.5,310.9 564.5,309.9 565.5,308.8 566.5,307.7 567.5,306.6 568.5,305.4 569.5,304.2 570.5,303.1 571.5,301.9 572.5,300.6 573.5,299.4 574.5,298.1 575.5,296.9 576.5,295.6 577.5,294.3 578.5,292.9 579.5,291.6 580.5,290.3 581.5,288.9 582.5,287.6 583.5,286.2 584.5,284.8 585.5,283.4 586.5,282.0 587.5,280.6 588.5,279.3 589.5,277.9 590.5,276.4 591.5,275.0 592.5,273.6 593.5,272.2 594.5,270.8 595.5,269.4 596.5,268.1 597.5,266.7 598.5,265.3 599.5,263.9 600.5,262.6 601.5,261.2 602.5,259.9 603.5,258.5 604.5,257.2 605.5,255.9 606.5,254.6 607.5,253.4 608.5,252.1 609.5,250.9 610.5,249.6 611.5,248.4 612.5,247.2 613.5,246.1 614.5,244.9 615.5,243.8 616.5,242.7 617.5,241.6 618.5,240.6 619.5,239.6 620.5,238.5 621.5,237.6 622.5,236.6 623.5,235.7 624.5,234.8 625.5,233.9 626.5,233.0 627.5,232.2 628.5,231.4 629.5,230.6 630.5,229.9 631.5,229.2 632.5,228.5 633.5,227.8 634.5,227.2 635.5,226.6 636.5,226.0 637.5,225.5 638.5,225.0 639.5,224.5 640.5,224.0 641.5,223.6 642.5,223.2 643.5,222.8 644.5,222.5 645.5,222.2 646.5,221.9 647.5,221.6 648.5,221.4 649.5,221.2 650.5,221.0 651.5,220.9 652.5,220.8 653.5,220.7 654.5,220.6 655.5,220.6 656.5,220.5 657.5,220.6 658.5,220.6 659.5,220.7 660.5,220.8 661.5,220.9 662.5,221.0 663.5,221.2 664.5,221.4 665.5,221.6 666.5,221.8 667.5,222.1 668.5,222.4 669.5,222.7 670.5,223.1 671.5,223.4 672.5,223.8 673.5,224.2 674.5,224.7 675.5,225.1 676.5,225.6 677.5,226.1 678.5,226.7 679.5,227.2 680.5,227.8 681.5,228.4 682.5,229.0 683.5,229.7 684.5,230.3 685.5,231.0 686.5,231.7 687.5,232.5 688.5,233.2 689.5,234.0 690.5,234.8 691.5,235.6 692.5,236.5 693.5,237.3" fill="none" stroke="#ff0000" stroke-width="1" shape-rendering="crispEdges"/><polyline points="153.5,281.0 154.5,280.7 155.5,280.4 156.5,280.1 157.5,279.9 158.5,279.6 159.5,279.3 160.5,279.0 161.5,278.8 162.5,278.5 163.5,278.2 164.5,278.0 165.5,277.7 166.5,277.5 167.5,277.3 168.5,277.1 169.5,276.9 170.5,276.7 171.5,276.5 172.5,276.4 173.5,276.3 174.5,276.1 175.5,276.0 176.5,276.0 177.5,275.9 178.5,275.8 179.5,275.8 180.5,275.8 181.5,275.8 182.5,275.8 183.5,275.9 184.5,275.9 185.5,276.0 186.5,276.1 187.5,276.2 188.5,276.3 189.5,276.5 190.5,276.7 191.5,276.8 192.5,277.0 193.5,277.2 194.5,277.5 195.5,277.7 196.5,277.9 197.5,278.2 198.5,278.4 199.5,278.7 200.5,279.0 201.5,279.3 202.5,279.5 203.5,279.8 204.5,280.1 205.5,280.4 206.5,280.7 207.5,281.0 208.5,281.3 209.5,281.5 210.5,281.8 211.5,282.1 212.5,282.3 213.5,282.6 214.5,282.8 215.5,283.0 216.5,283.2 217.5,283.4 218.5,283.5 219.5,283.7 220.5,283.8 221.5,283.9 222.5,284.0 223.5,284.0 224.5,284.0 225.5,284.0 226.5,284.0 227.5,283.9 228.5,283.8 229.5,283.7 230.5,283.5 231.5,283.3 232.5,283.1 233.5,282.8 234.5,282.5 235.5,282.2 236.5,281.8 237.5,281.4 238.5,280.9 239.5,280.4 240.5,279.9 241.5,279.3 242.5,278.7 243.5,278.1 244.5,277.4 245.5,276.7 246.5,275.9 247.5,275.1 248.5,274.3 249.5,273.4 250.5,272.5 251.5,271.6 252.5,270.6 253.5,269.6 254.5,268.5 255.5,267.5 256.5,266.4 257.5,265.2 258.5,264.1 259.5,262.9 260.5,261.7 261.5,260.5 262.5,259.2 263.5,257.9 264.5,256.7 265.5,255.3 266.5,254.0 267.5,252.7 268.5,251.4 269.5,250.0 270.5,248.6 271.5,247.3 272.5,245.9 273.5,244.5 274.5,243.2 275.5,241.8 276.5,240.4 277.5,239.1 278.5,237.7 279.5,236.4 280.5,235.1 281.5,233.8 282.5,232.5 283.5,231.2 284.5,229.9 285.5,228.7 286.5,227.5 287.5,226.3 288.5,225.2 289.5,224.0 290.5,223.0 291.5,221.9 292.5,220.9 293.5,219.9 294.5,218.9 295.5,218.0 296.5,217.1 297.5,216.3 298.5,215.5 299.5,214.8 300.5,214.1 301.5,213.4 302.5,212.8 303.5,212.3 304.5,211.8 305.5,211.3 306.5,210.9 307.5,210.5 308.5,210.2 309.5,210.0 310.5,209.8 311.5,209.6 312.5,209.5 313.5,209.5 314.5,209.5 315.5,209.5 316.5,209.7 317.5,209.8 318.5,210.0 319.5,210.3 320.5,210.6 321.5,211.0 322.5,211.4 323.5,211.9 324.5,212.4 325.5,212.9 326.5,213.5 327.5,214.2 328.5,214.9 329.5,215.6 330.5,216.4 331.5,217.2 332.5,218.1 333.5,219.0 334.5,219.9 335.5,220.9 336.5,221.9 337.5,222.9 338.5,224.0 339.5,225.1 340.5,226.2 341.5,227.4 342.5,228.5 343.5,229.7 344.5,230.9 345.5,232.2 346.5,233.4 347.5,234.7 348.5,236.0 349.5,237.3 350.5,238.6 351.5,239.9 352.5,241.2 353.5,242.5 354.5,243.8 355.5,245.1 356.5,246.5 357.5,247.8 358.5,249.1 359.5,250.4 360.5,251.7 361.5,253.0 362.5,254.3 363.5,255.5 364.5,256.8 365.5,258.0 366.5,259.2 367.5,260.4 368.5,261.6 369.5,262.8 370.5,263.9 371.5,265.0 372.5,266.1 373.5,267.2 374.5,268.2 375.5,269.2 376.5,270.2 377.5,271.1 378.5,272.1 379.5,272.9 380.5,273.8 381.5,274.6 382.5,275.4 383.5,276.2 384.5,276.9 385.5,277.6 386.5,278.2 387.5,278.8 388.5,279.4 389.5,279.9 390.5,280.4 391.5,280.9 392.5,281.4 393.5,281.8 394.5,282.1 395.5,282.5 396.5,282.8 397.5,283.0 398.5,283.3 399.5,283.5 400.5,283.6 401.5,283.8 402.5,283.9 403.5,283.9 404.5,284.0 405.5,284.0 406.5,284.0 407.5,284.0 408.5,283.9 409.5,283.9 410.5,283.8 411.5,283.6 412.5,283.5 413.5,283.3 414.5,283.2 415.5,283.0 416.5,282.8 417.5,282.5 418.5,282.3 419.5,282.1 420.5,281.8 421.5,281.5 422.5,281.3 423.5,281.0 424.5,280.7 425.5,280.4 426.5,280.1 427.5,279.9 428.5,279.6 429.5,279.3 430.5,279.0 431.5,278.8 432.5,278.5 433.5,278.2 434.5,278.0 435.5,277.7 436.5,277.5 437.5,277.3 438.5,277.1 439.5,276.9 440.5,276.7 441.5,276.5 442.5,276.4 443.5,276.3 444.5,276.1 445.5,276.0 446.5,276.0 447.5,275.9 448.5,275.8 449.5,275.8 450.5,275.8 451.5,275.8 452.5,275.8 453.5,275.9 454.5,275.9 455.5,276.0 456.5,276.1 457.5,276.2 458.5,276.3 459.5,276.5 460.5,276.7 461.5,276.8 462.5,277.0 463.5,277.2 464.5,277.5 465.5,277.7 466.5,277.9 467.5,278.2 468.5,278.4 469.5,278.7 470.5,279.0 471.5,279.3 472.5,279.5 473.5,279.8 474.5,280.1 475.5,280.4 476.5,280.7 477.5,281.0 478.5,281.3 479.5,281.5 480.5,281.8 481.5,282.1 482.5,282.3 483.5,282.6 484.5,282.8 485.5,283.0 486.5,283.2 487.5,283.4 488.5,283.5 489.5,283.7 490.5,283.8 491.5,283.9 492.5,284.0 493.5,284.0 494.5,284.0 495.5,284.0 496.5,284.0 497.5,283.9 498.5,283.8 499.5,283.7 500.5,283.5 501.5,283.3 502.5,283.1 503.5,282.8 504.5,282.5 505.5,282.2 506.5,281.8 507.5,281.4 508.5,280.9 509.5,280.4 510.5,279.9 511.5,279.3 512.5,278.7 513.5,278.1 514.5,277.4 515.5,276.7 516.5,275.9 517.5,275.1 518.5,274.3 519.5,273.4 520.5,272.5 521.5,271.6 522.5,270.6 523.5,269.6 524.5,268.5 525.5,267.5 526.5,266.4 527.5,265.2 528.5,264.1 529.5,262.9 530.5,261.7 531.5,260.5 532.5,259.2 533.5,257.9 534.5,256.7 535.5,255.3 536.5,254.0 537.5,252.7 538.5,251.4 539.5,250.0 540.5,248.6 541.5,247.3 542.5,245.9 543.5,244.5 544.5,243.2 545.5,241.8 546.5,240.4 547.5,239.1 548.5,237.7 549.5,236.4 550.5,235.1 551.5,233.8 552.5,232.5 553.5,231.2 554.5,229.9 555.5,228.7 556.5,227.5 557.5,226.3 558.5,225.2 559.5,224.0 560.5,223.0 561.5,221.9 562.5,220.9 563.5,219.9 564.5,218.9 565.5,218.0 566.5,217.1 567.5,216.3 568.5,215.5 569.5,214.8 570.5,214.1 571.5,213.4 572.5,212.8 573.5,212.3 574.5,211.8 575.5,211.3 576.5,210.9 577.5,210.5 578.5,210.2 579.5,210.0 580.5,209.8 581.5,209.6 582.5,209.5 583.5,209.5 584.5,209.5 585.5,209.5 586.5,209.7 587.5,209.8 588.5,210.0 589.5,210.3 590.5,210.6 591.5,211.0 592.5,211.4 593.5,211.9 594.5,212.4 595.5,212.9 596.5,213.5 597.5,214.2 598.5,214.9 599.5,215.6 600.5,216.4 601.5,217.2 602.5,218.1 603.5,219.0 604.5,219.9 605.5,220.9 606.5,221.9 607.5,222.9 608.5,224.0 609.5,225.1 610.5,226.2 611.5,227.4 612.5,228.5 613.5,229.7 614.5,230.9 615.5,232.2 616.5,233.4 617.5,234.7 618.5,236.0 619.5,237.3 620.5,238.6 621.5,239.9 622.5,241.2 623.5,242.5 624.5,243.8 625.5,245.1 626.5,246.5 627.5,247.8 628.5,249.1 629.5,250.4 630.5,251.7 631.5,253.0 632.5,254.3 633.5,255.5 634.5,256.8 635.5,258.0 636.5,259.2 637.5,260.4 638.5,261.6 639.5,262.8 640.5,263.9 641.5,265.0 642.5,266.1 643.5,267.2 644.5,268.2 645.5,269.2 646.5,270.2 647.5,271.1 648.5,272.1 649.5,272.9 650.5,273.8 651.5,274.6 652.5,275.4 653.5,276.2 654.5,276.9 655.5,277.6 656.5,278.2 657.5,278.8 658.5,279.4 659.5,279.9 660.5,280.4 661.5,280.9 662.5,281.4 663.5,281.8 664.5,282.1 665.5,282.5 666.5,282.8 667.5,283.0 668.5,283.3 669.5,283.5 670.5,283.6 671.5,283.8 672.5,283.9 673.5,283.9 674.5,284.0 675.5,284.0 676.5,284.0 677.5,284.0 678.5,283.9 679.5,283.9 680.5,283.8 681.5,283.6 682.5,283.5 683.5,283.3 684.5,283.2 685.5,283.0 686.5,282.8 687.5,282.5 688.5,282.3 689.5,282.1 690.5,281.8 691.5,281.5 692.5,281.3 693.5,281.0" fill="none" stroke="#00ffff" stroke-width="1" shape-rendering="crispEdges"/><polyline points="153.5,209.5 154.5,210.1 155.5,210.8 156.5,211.5 157.5,212.3 158.5,213.1 159.5,214.0 160.5,215.0 161.5,216.0 162.5,217.1 163.5,218.2 164.5,219.4 165.5,220.7 166.5,222.0 167.5,223.4 168.5,224.9 169.5,226.4 170.5,228.0 171.5,229.6 172.5,231.3 173.5,233.0 174.5,234.8 175.5,236.7 176.5,238.6 177.5,240.5 178.5,242.5 179.5,244.5 180.5,246.6 181.5,248.7 182.5,250.8 183.5,253.0 184.5,255.2 185.5,257.5 186.5,259.7 187.5,262.0 188.5,264.3 189.5,266.6 190.5,269.0 191.5,271.3 192.5,273.7 193.5,276.0 194.5,278.4 195.5,280.7 196.5,283.0 197.5,285.4 198.5,287.7 199.5,290.0 200.5,292.2 201.5,294.5 202.5,296.7 203.5,298.8 204.5,301.0 205.5,303.1 206.5,305.1 207.5,307.1 208.5,309.0 209.5,310.9 210.5,312.7 211.5,314.5 212.5,316.2 213.5,317.8 214.5,319.4 215.5,320.9 216.5,322.3 217.5,323.6 218.5,324.9 219.5,326.0 220.5,327.1 221.5,328.1 222.5,329.0 223.5,329.8 224.5,330.5 225.5,331.1 226.5,331.6 227.5,332.0 228.5,332.4 229.5,332.6 230.5,332.7 231.5,332.8 232.5,332.7 233.5,332.5 234.5,332.3 235.5,331.9 236.5,331.4 237.5,330.9 238.5,330.2 239.5,329.5 240.5,328.6 241.5,327.7 242.5,326.7 243.5,325.5 244.5,324.3 245.5,323.1 246.5,321.7 247.5,320.2 248.5,318.7 249.5,317.1 250.5,315.5 251.5,313.7 252.5,311.9 253.5,310.1 254.5,308.2 255.5,306.2 256.5,304.2 257.5,302.1 258.5,300.0 259.5,297.8 260.5,295.6 261.5,293.4 262.5,291.1 263.5,288.9 264.5,286.5 265.5,284.2 266.5,281.9 267.5,279.5 268.5,277.2 269.5,274.8 270.5,272.4 271.5,270.1 272.5,267.7 273.5,265.4 274.5,263.1 275.5,260.8 276.5,258.5 277.5,256.2 278.5,254.0 279.5,251.8 280.5,249.6 281.5,247.5 282.5,245.4 283.5,243.3 284.5,241.3 285.5,239.3 286.5,237.4 287.5,235.5 288.5,233.7 289.5,231.9 290.5,230.2 291.5,228.6 292.5,227.0 293.5,225.4 294.5,223.9 295.5,222.5 296.5,221.2 297.5,219.9 298.5,218.6 299.5,217.5 300.5,216.4 301.5,215.3 302.5,214.3 303.5,213.4 304.5,212.6 305.5,211.8 306.5,211.1 307.5,210.4 308.5,209.8 309.5,209.2 310.5,208.7 311.5,208.3 312.5,207.9 313.5,207.6 314.5,207.3 315.5,207.1 316.5,206.9 317.5,206.8 318.5,206.7 319.5,206.7 320.5,206.7 321.5,206.8 322.5,206.8 323.5,207.0 324.5,207.1 325.5,207.3 326.5,207.6 327.5,207.8 328.5,208.1 329.5,208.4 330.5,208.7 331.5,209.1 332.5,209.4 333.5,209.8 334.5,210.2 335.5,210.6 336.5,211.0 337.5,211.4 338.5,211.9 339.5,212.3 340.5,212.7 341.5,213.2 342.5,213.6 343.5,214.0 344.5,214.5 345.5,214.9 346.5,215.3 347.5,215.7 348.5,216.0 349.5,216.4 350.5,216.8 351.5,217.1 352.5,217.4 353.5,217.7 354.5,218.0 355.5,218.3 356.5,218.5 357.5,218.7 358.5,218.9 359.5,219.1 360.5,219.2 361.5,219.4 362.5,219.4 363.5,219.5 364.5,219.6 365.5,219.6 366.5,219.6 367.5,219.5 368.5,219.5 369.5,219.4 370.5,219.3 371.5,219.1 372.5,219.0 373.5,218.8 374.5,218.6 375.5,218.4 376.5,218.1 377.5,217.8 378.5,217.6 379.5,217.2 380.5,216.9 381.5,216.6 382.5,216.2 383.5,215.8 384.5,215.4 385.5,215.0 386.5,214.6 387.5,214.2 388.5,213.8 389.5,213.4 390.5,212.9 391.5,212.5 392.5,212.1 393.5,211.6 394.5,211.2 395.5,210.8 396.5,210.4 397.5,210.0 398.5,209.6 399.5,209.2 400.5,208.8 401.5,208.5 402.5,208.2 403.5,207.9 404.5,207.6 405.5,207.3 406.5,207.1 407.5,206.9 408.5,206.8 409.5,206.6 410.5,206.5 411.5,206.5 412.5,206.5 413.5,206.5 414.5,206.6 415.5,206.7 416.5,206.9 417.5,207.1 418.5,207.4 419.5,207.7 420.5,208.1 421.5,208.5 422.5,209.0 423.5,209.5 424.5,210.1 425.5,210.8 426.5,211.5 427.5,212.3 428.5,213.1 429.5,214.0 430.5,215.0 431.5,216.0 432.5,217.1 433.5,218.2 434.5,219.4 435.5,220.7 436.5,222.0 437.5,223.4 438.5,224.9 439.5,226.4 440.5,228.0 441.5,229.6 442.5,231.3 443.5,233.0 444.5,234.8 445.5,236.7 446.5,238.6 447.5,240.5 448.5,242.5 449.5,244.5 450.5,246.6 451.5,248.7 452.5,250.8 453.5,253.0 454.5,255.2 455.5,257.5 456.5,259.7 457.5,262.0 458.5,264.3 459.5,266.6 460.5,269.0 461.5,271.3 462.5,273.7 463.5,276.0 464.5,278.4 465.5,280.7 466.5,283.0 467.5,285.4 468.5,287.7 469.5,290.0 470.5,292.2 471.5,294.5 472.5,296.7 473.5,298.8 474.5,301.0 475.5,303.1 476.5,305.1 477.5,307.1 478.5,309.0 479.5,310.9 480.5,312.7 481.5,314.5 482.5,316.2 483.5,317.8 484.5,319.4 485.5,320.9 486.5,322.3 487.5,323.6 488.5,324.9 489.5,326.0 490.5,327.1 491.5,328.1 492.5,329.0 493.5,329.8 494.5,330.5 495.5,331.1 496.5,331.6 497.5,332.0 498.5,332.4 499.5,332.6 500.5,332.7 501.5,332.8 502.5,332.7 503.5,332.5 504.5,332.3 505.5,331.9 506.5,331.4 507.5,330.9 508.5,330.2 509.5,329.5 510.5,328.6 511.5,327.7 512.5,326.7 513.5,325.5 514.5,324.3 515.5,323.1 516.5,321.7 517.5,320.2 518.5,318.7 519.5,317.1 520.5,315.5 521.5,313.7 522.5,311.9 523.5,310.1 524.5,308.2 525.5,306.2 526.5,304.2 527.5,302.1 528.5,300.0 529.5,297.8 530.5,295.6 531.5,293.4 532.5,291.1 533.5,288.9 534.5,286.5 535.5,284.2 536.5,281.9 537.5,279.5 538.5,277.2 539.5,274.8 540.5,272.4 541.5,270.1 542.5,267.7 543.5,265.4 544.5,263.1 545.5,260.8 546.5,258.5 547.5,256.2 548.5,254.0 549.5,251.8 550.5,249.6 551.5,247.5 552.5,245.4 553.5,243.3 554.5,241.3 555.5,239.3 556.5,237.4 557.5,235.5 558.5,233.7 559.5,231.9 560.5,230.2 561.5,228.6 562.5,227.0 563.5,225.4 564.5,223.9 565.5,222.5 566.5,221.2 567.5,219.9 568.5,218.6 569.5,217.5 570.5,216.4 571.5,215.3 572.5,214.3 573.5,213.4 574.5,212.6 575.5,211.8 576.5,211.1 577.5,210.4 578.5,209.8 579.5,209.2 580.5,208.7 581.5,208.3 582.5,207.9 583.5,207.6 584.5,207.3 585.5,207.1 586.5,206.9 587.5,206.8 588.5,206.7 589.5,206.7 590.5,206.7 591.5,206.8 592.5,206.8 593.5,207.0 594.5,207.1 595.5,207.3 596.5,207.6 597.5,207.8 598.5,208.1 599.5,208.4 600.5,208.7 601.5,209.1 602.5,209.4 603.5,209.8 604.5,210.2 605.5,210.6 606.5,211.0 607.5,211.4 608.5,211.9 609.5,212.3 610.5,212.7 611.5,213.2 612.5,213.6 613.5,214.0 614.5,214.5 615.5,214.9 616.5,215.3 617.5,215.7 618.5,216.0 619.5,216.4 620.5,216.8 621.5,217.1 622.5,217.4 623.5,217.7 624.5,218.0 625.5,218.3 626.5,218.5 627.5,218.7 628.5,218.9 629.5,219.1 630.5,219.2 631.5,219.4 632.5,219.4 633.5,219.5 634.5,219.6 635.5,219.6 636.5,219.6 637.5,219.5 638.5,219.5 639.5,219.4 640.5,219.3 641.5,219.1 642.5,219.0 643.5,218.8 644.5,218.6 645.5,218.4 646.5,218.1 647.5,217.8 648.5,217.6 649.5,217.2 650.5,216.9 651.5,216.6 652.5,216.2 653.5,215.8 654.5,215.4 655.5,215.0 656.5,214.6 657.5,214.2 658.5,213.8 659.5,213.4 660.5,212.9 661.5,212.5 662.5,212.1 663.5,211.6 664.5,211.2 665.5,210.8 666.5,210.4 667.5,210.0 668.5,209.6 669.5,209.2 670.5,208.8 671.5,208.5 672.5,208.2 673.5,207.9 674.5,207.6 675.5,207.3 676.5,207.1 677.5,206.9 678.5,206.8 679.5,206.6 680.5,206.5 681.5,206.5 682.5,206.5 683.5,206.5 684.5,206.6 685.5,206.7 686.5,206.9 687.5,207.1 688.5,207.4 689.5,207.7 690.5,208.1 691.5,208.5 692.5,209.0 693.5,209.5" fill="none" stroke="#ffff00" stroke-width="1" shape-rendering="crispEdges"/></g></svg>
<svg width="1024" height="768" style="left:0;top:0"><polygon points="715.5,133.0 720.0,137.5 715.5,142.0 711.0,137.5" fill="none"/><polyline points="710.5,138.0 715.5,133.0 720.5,138.0" fill="none" stroke="#ffffff" stroke-width="1.6"/><polyline points="710.5,138.0 715.5,142.5 720.5,138.0" fill="none" stroke="#606060" stroke-width="1.8"/></svg>
<div class="a t" style="left:725px;top:132px;font-size:12px;letter-spacing:0.3px;">Small</div>
<svg width="1024" height="768" style="left:0;top:0"><polygon points="715.5,150.0 720.0,154.5 715.5,159.0 711.0,154.5" fill="none"/><polyline points="710.5,155.0 715.5,150.0 720.5,155.0" fill="none" stroke="#ffffff" stroke-width="1.6"/><polyline points="710.5,155.0 715.5,159.5 720.5,155.0" fill="none" stroke="#606060" stroke-width="1.8"/></svg>
<div class="a t" style="left:725px;top:149px;font-size:12px;letter-spacing:0.3px;">Medium</div>
<svg width="1024" height="768" style="left:0;top:0"><polygon points="715.5,169.0 720.0,173.5 715.5,178.0 711.0,173.5" fill="#a0a0a0"/><polyline points="710.5,174.0 715.5,169.0 720.5,174.0" fill="none" stroke="#606060" stroke-width="1.6"/><polyline points="710.5,174.0 715.5,178.5 720.5,174.0" fill="none" stroke="#ffffff" stroke-width="1.8"/></svg>
<div class="a t" style="left:725px;top:168px;font-size:12px;letter-spacing:0.3px;">Large</div>
<div class="a t" style="left:712px;top:192px;font-size:12px;font-weight:bold;letter-spacing:0.3px;">Increment</div>
<div class="a" style="left:710px;top:233px;width:12px;height:12px;box-sizing:border-box;border:1px solid;border-color:#fff #606060 #606060 #fff;"></div>
<div class="a" style="left:711px;top:234px;width:10px;height:10px;box-sizing:border-box;border:1px solid;border-color:#f0f0f0 #808080 #808080 #f0f0f0;"></div>
<div class="a t" style="left:725px;top:233px;font-size:12px;letter-spacing:0.3px;">Grid on/off</div>
<svg width="1024" height="768" style="left:0;top:0"><polygon points="715.5,262.0 720.0,266.5 715.5,271.0 711.0,266.5" fill="#a0a0a0"/><polyline points="710.5,267.0 715.5,262.0 720.5,267.0" fill="none" stroke="#606060" stroke-width="1.6"/><polyline points="710.5,267.0 715.5,271.5 720.5,267.0" fill="none" stroke="#ffffff" stroke-width="1.8"/></svg>
<div class="a t" style="left:725px;top:261px;font-size:12px;letter-spacing:0.3px;">Translucent</div>
<svg width="1024" height="768" style="left:0;top:0"><polygon points="715.5,280.0 720.0,284.5 715.5,289.0 711.0,284.5" fill="none"/><polyline points="710.5,285.0 715.5,280.0 720.5,285.0" fill="none" stroke="#ffffff" stroke-width="1.6"/><polyline points="710.5,285.0 715.5,289.5 720.5,285.0" fill="none" stroke="#606060" stroke-width="1.8"/></svg>
<div class="a t" style="left:725px;top:279px;font-size:12px;letter-spacing:0.3px;">Above trends</div>
<svg width="1024" height="768" style="left:0;top:0"><polygon points="715.5,300.0 720.0,304.5 715.5,309.0 711.0,304.5" fill="none"/><polyline points="710.5,305.0 715.5,300.0 720.5,305.0" fill="none" stroke="#ffffff" stroke-width="1.6"/><polyline points="710.5,305.0 715.5,309.5 720.5,305.0" fill="none" stroke="#606060" stroke-width="1.8"/></svg>
<div class="a t" style="left:725px;top:299px;font-size:12px;letter-spacing:0.3px;">Below trends</div>
<div class="a t" style="left:712px;top:325px;font-size:12px;font-weight:bold;">Grid type</div>
<div class="a t" style="left:705px;top:376px;font-size:11px;">1</div>
<div class="a t" style="left:790px;top:376px;font-size:11px;">7</div>
<svg width="1024" height="768" style="left:0;top:0" shape-rendering="crispEdges"><defs><pattern id="pk705" x="0" y="0" width="4" height="4" patternUnits="userSpaceOnUse"><rect width="4" height="4" fill="#c85ca6"/><g fill="#a8aca8"><rect x="0" y="0" width="1" height="1"/><rect x="2" y="0" width="1" height="1"/><rect x="0" y="2" width="1" height="1"/><rect x="2" y="2" width="1" height="1"/><rect x="1" y="3" width="1" height="1"/></g></pattern></defs><rect x="705" y="393" width="94" height="15" fill="url(#pk705)"/></svg>
<div class="a" style="left:705px;top:393px;width:94px;height:15px;box-sizing:border-box;border:1px solid;border-color:#606060 #fff #fff #606060;"></div>
<div class="a" style="left:743px;top:396px;width:17px;height:9px;box-sizing:border-box;border:1px solid;border-color:#fff #606060 #606060 #fff;background:#c4c4c4;"></div>
<svg width="1024" height="768" style="left:0;top:0"><polygon points="708,400.5 715,396.5 715,404.5" fill="#c4c4c4" stroke="#fff" stroke-width="1"/><polygon points="796,400.5 789,396.5 789,404.5" fill="#c4c4c4" stroke="#fff" stroke-width="1"/></svg>
<div class="a t" style="left:714px;top:416px;font-size:12px;font-weight:bold;letter-spacing:0.3px;">Trend count</div>
<svg width="1024" height="768" style="left:0;top:0" shape-rendering="crispEdges"><defs><pattern id="pk152" x="0" y="0" width="4" height="4" patternUnits="userSpaceOnUse"><rect width="4" height="4" fill="#c85ca6"/><g fill="#a8aca8"><rect x="0" y="0" width="1" height="1"/><rect x="2" y="0" width="1" height="1"/><rect x="0" y="2" width="1" height="1"/><rect x="2" y="2" width="1" height="1"/><rect x="1" y="3" width="1" height="1"/></g></pattern></defs><rect x="152" y="447" width="265" height="15" fill="url(#pk152)"/></svg>
<div class="a" style="left:152px;top:447px;width:265px;height:15px;box-sizing:border-box;border:1px solid;border-color:#606060 #fff #fff #606060;"></div>
<div class="a" style="left:163px;top:450px;width:25px;height:9px;box-sizing:border-box;border:1px solid;border-color:#fff #606060 #606060 #fff;background:#c4c4c4;"></div>
<svg width="1024" height="768" style="left:0;top:0"><polygon points="155,454.5 162,450.5 162,458.5" fill="#c4c4c4" stroke="#fff" stroke-width="1"/><polygon points="414,454.5 407,450.5 407,458.5" fill="#c4c4c4" stroke="#fff" stroke-width="1"/></svg>
<div class="a t" style="left:152px;top:470px;font-size:11px;">Low</div>
<div class="a t" style="left:390px;top:470px;font-size:11px;">High</div>
<div class="a t" style="left:232px;top:487px;font-size:12.5px;font-weight:bold;">Sample Size</div>
<div class="a t" style="left:481px;top:448px;font-size:12px;font-weight:bold;letter-spacing:0.25px;">Orientation</div>
<svg width="1024" height="768" style="left:0;top:0"><polygon points="481.5,476.0 486.0,480.5 481.5,485.0 477.0,480.5" fill="none"/><polyline points="476.5,481.0 481.5,476.0 486.5,481.0" fill="none" stroke="#ffffff" stroke-width="1.6"/><polyline points="476.5,481.0 481.5,485.5 486.5,481.0" fill="none" stroke="#606060" stroke-width="1.8"/></svg>
<div class="a t" style="left:492px;top:475px;font-size:12px;letter-spacing:0.42px;">Vertical, bottom to top</div>
<svg width="1024" height="768" style="left:0;top:0"><polygon points="481.5,498.5 486.0,503 481.5,507.5 477.0,503" fill="none"/><polyline points="476.5,503.5 481.5,498.5 486.5,503.5" fill="none" stroke="#ffffff" stroke-width="1.6"/><polyline points="476.5,503.5 481.5,508.0 486.5,503.5" fill="none" stroke="#606060" stroke-width="1.8"/></svg>
<div class="a t" style="left:492px;top:498px;font-size:12px;letter-spacing:0.42px;">Vertical, top to bottom</div>
<svg width="1024" height="768" style="left:0;top:0"><polygon points="636.5,476.0 641.0,480.5 636.5,485.0 632.0,480.5" fill="none"/><polyline points="631.5,481.0 636.5,476.0 641.5,481.0" fill="none" stroke="#ffffff" stroke-width="1.6"/><polyline points="631.5,481.0 636.5,485.5 641.5,481.0" fill="none" stroke="#606060" stroke-width="1.8"/></svg>
<div class="a t" style="left:646px;top:475px;font-size:12px;letter-spacing:0.42px;letter-spacing:0.35px;">Horizontal, left to right</div>
<svg width="1024" height="768" style="left:0;top:0"><polygon points="636.5,498.5 641.0,503 636.5,507.5 632.0,503" fill="#a0a0a0"/><polyline points="631.5,503.5 636.5,498.5 641.5,503.5" fill="none" stroke="#606060" stroke-width="1.6"/><polyline points="631.5,503.5 636.5,508.0 641.5,503.5" fill="none" stroke="#ffffff" stroke-width="1.8"/></svg>
<div class="a t" style="left:646px;top:498px;font-size:12px;letter-spacing:0.42px;letter-spacing:0.35px;">Horizontal, right to left</div>
<svg width="1024" height="768" style="left:0;top:0"><rect x="801" y="110" width="3" height="410" fill="url(#qnx)"/></svg>
<div class="a" style="left:804px;top:91px;width:1px;height:430px;background:#fff;"></div>
<div class="a" style="left:805px;top:86px;width:4px;height:439px;background:#007f70;"></div>
<div class="a" style="left:79px;top:546px;width:800px;height:82px;background:#c4c4c4;"></div>
<div class="a" style="left:79px;top:546px;width:800px;height:2px;background:#fff;"></div>
<div class="a" style="left:79px;top:626px;width:800px;height:2px;background:#606060;"></div>
<div class="a" style="left:85px;top:550px;width:34px;height:22px;border:1px solid;border-color:#fff #606060 #606060 #fff;background:#c4c4c4;"></div>
<div class="a" style="left:85px;top:574px;width:34px;height:23px;border:1px solid;border-color:#fff #606060 #606060 #fff;background:#c4c4c4;"></div>
<div class="a" style="left:85px;top:599px;width:34px;height:23px;border:1px solid;border-color:#fff #606060 #606060 #fff;background:#c4c4c4;"></div>
<div class="a" style="left:90px;top:553px;width:24px;height:16px;border:1px solid;border-color:#fff #606060 #606060 #fff;background:#c4c4c4;"></div>
<div class="a" style="left:96px;top:561px;width:14px;height:3px;box-sizing:border-box;border:1px solid;border-color:#fff #606060 #606060 #fff;"></div>
<svg width="1024" height="768" style="left:0;top:0" shape-rendering="crispEdges"><rect x="94" y="576" width="18" height="13" fill="#000"/><rect x="95" y="577" width="15" height="11" fill="#c4c4c4"/><rect x="110" y="577" width="2" height="11" fill="#808080"/><rect x="97" y="579" width="12" height="8" fill="#000"/><rect x="98" y="580" width="11" height="7" fill="#a0a0a0"/><polygon points="92,588 114,588 117,591 89,591" fill="#c4c4c4" stroke="#000" stroke-width="1"/><rect x="89" y="591" width="26" height="6" fill="#000"/><rect x="90" y="592" width="24" height="4" fill="#c4c4c4"/><rect x="115" y="590" width="2" height="6" fill="#404040"/><rect x="102" y="593" width="10" height="2" fill="#fff"/><rect x="92" y="594" width="3" height="1" fill="#000"/></svg>
<svg width="1024" height="768" style="left:0;top:0"><text x="103" y="620" text-anchor="middle" font-size="25" font-weight="bold" font-family="Liberation Sans" fill="#606060">?</text><text x="102" y="620" text-anchor="middle" font-size="25" font-weight="bold" font-family="Liberation Sans" fill="#000" stroke="#000" stroke-width="2.5">?</text><text x="102" y="620" text-anchor="middle" font-size="25" font-weight="bold" font-family="Liberation Sans" fill="#ffff00">?</text></svg>
<div class="a" style="left:124px;top:551px;width:280px;height:73px;background:#606060;"></div>
<div class="a" style="left:125px;top:552px;width:279px;height:71px;background:#fff;"></div>
<div class="a" style="left:126px;top:552px;width:278px;height:69px;background:#000;"></div>
<div class="a" style="left:127px;top:553px;width:90px;height:19px;background:#000;"></div>
<div class="a" style="left:127px;top:572px;width:90px;height:7px;background:#181848;"></div>
<div class="a" style="left:127px;top:579px;width:90px;height:7px;background:#000;"></div>
<div class="a" style="left:127px;top:586px;width:90px;height:7px;background:#181848;"></div>
<div class="a" style="left:127px;top:593px;width:90px;height:14px;background:#0000a0;"></div>
<div class="a" style="left:127px;top:607px;width:90px;height:7px;background:#0000c8;"></div>
<div class="a" style="left:127px;top:614px;width:90px;height:6px;background:#0000ff;"></div>
<svg width="1024" height="768" style="left:0;top:0" shape-rendering="crispEdges"><g fill="#202070"><rect x="128" y="565" width="1" height="1"/><rect x="132" y="565" width="1" height="1"/><rect x="136" y="565" width="1" height="1"/><rect x="140" y="565" width="1" height="1"/><rect x="144" y="565" width="1" height="1"/><rect x="148" y="565" width="1" height="1"/><rect x="152" y="565" width="1" height="1"/><rect x="156" y="565" width="1" height="1"/><rect x="160" y="565" width="1" height="1"/><rect x="164" y="565" width="1" height="1"/><rect x="168" y="565" width="1" height="1"/><rect x="172" y="565" width="1" height="1"/><rect x="176" y="565" width="1" height="1"/><rect x="180" y="565" width="1" height="1"/><rect x="184" y="565" width="1" height="1"/><rect x="188" y="565" width="1" height="1"/><rect x="192" y="565" width="1" height="1"/><rect x="196" y="565" width="1" height="1"/><rect x="200" y="565" width="1" height="1"/><rect x="204" y="565" width="1" height="1"/><rect x="208" y="565" width="1" height="1"/><rect x="212" y="565" width="1" height="1"/><rect x="216" y="565" width="1" height="1"/><rect x="128" y="569" width="1" height="1"/><rect x="132" y="569" width="1" height="1"/><rect x="136" y="569" width="1" height="1"/><rect x="140" y="569" width="1" height="1"/><rect x="144" y="569" width="1" height="1"/><rect x="148" y="569" width="1" height="1"/><rect x="152" y="569" width="1" height="1"/><rect x="156" y="569" width="1" height="1"/><rect x="160" y="569" width="1" height="1"/><rect x="164" y="569" width="1" height="1"/><rect x="168" y="569" width="1" height="1"/><rect x="172" y="569" width="1" height="1"/><rect x="176" y="569" width="1" height="1"/><rect x="180" y="569" width="1" height="1"/><rect x="184" y="569" width="1" height="1"/><rect x="188" y="569" width="1" height="1"/><rect x="192" y="569" width="1" height="1"/><rect x="196" y="569" width="1" height="1"/><rect x="200" y="569" width="1" height="1"/><rect x="204" y="569" width="1" height="1"/><rect x="208" y="569" width="1" height="1"/><rect x="212" y="569" width="1" height="1"/><rect x="216" y="569" width="1" height="1"/><rect x="128" y="582" width="1" height="1"/><rect x="132" y="582" width="1" height="1"/><rect x="136" y="582" width="1" height="1"/><rect x="140" y="582" width="1" height="1"/><rect x="144" y="582" width="1" height="1"/><rect x="148" y="582" width="1" height="1"/><rect x="152" y="582" width="1" height="1"/><rect x="156" y="582" width="1" height="1"/><rect x="160" y="582" width="1" height="1"/><rect x="164" y="582" width="1" height="1"/><rect x="168" y="582" width="1" height="1"/><rect x="172" y="582" width="1" height="1"/><rect x="176" y="582" width="1" height="1"/><rect x="180" y="582" width="1" height="1"/><rect x="184" y="582" width="1" height="1"/><rect x="188" y="582" width="1" height="1"/><rect x="192" y="582" width="1" height="1"/><rect x="196" y="582" width="1" height="1"/><rect x="200" y="582" width="1" height="1"/><rect x="204" y="582" width="1" height="1"/><rect x="208" y="582" width="1" height="1"/><rect x="212" y="582" width="1" height="1"/><rect x="216" y="582" width="1" height="1"/></g><g fill="#0000d0"><rect x="128" y="587" width="1" height="1"/><rect x="132" y="587" width="1" height="1"/><rect x="136" y="587" width="1" height="1"/><rect x="140" y="587" width="1" height="1"/><rect x="144" y="587" width="1" height="1"/><rect x="148" y="587" width="1" height="1"/><rect x="152" y="587" width="1" height="1"/><rect x="156" y="587" width="1" height="1"/><rect x="160" y="587" width="1" height="1"/><rect x="164" y="587" width="1" height="1"/><rect x="168" y="587" width="1" height="1"/><rect x="172" y="587" width="1" height="1"/><rect x="176" y="587" width="1" height="1"/><rect x="180" y="587" width="1" height="1"/><rect x="184" y="587" width="1" height="1"/><rect x="188" y="587" width="1" height="1"/><rect x="192" y="587" width="1" height="1"/><rect x="196" y="587" width="1" height="1"/><rect x="200" y="587" width="1" height="1"/><rect x="204" y="587" width="1" height="1"/><rect x="208" y="587" width="1" height="1"/><rect x="212" y="587" width="1" height="1"/><rect x="216" y="587" width="1" height="1"/><rect x="128" y="590" width="1" height="1"/><rect x="132" y="590" width="1" height="1"/><rect x="136" y="590" width="1" height="1"/><rect x="140" y="590" width="1" height="1"/><rect x="144" y="590" width="1" height="1"/><rect x="148" y="590" width="1" height="1"/><rect x="152" y="590" width="1" height="1"/><rect x="156" y="590" width="1" height="1"/><rect x="160" y="590" width="1" height="1"/><rect x="164" y="590" width="1" height="1"/><rect x="168" y="590" width="1" height="1"/><rect x="172" y="590" width="1" height="1"/><rect x="176" y="590" width="1" height="1"/><rect x="180" y="590" width="1" height="1"/><rect x="184" y="590" width="1" height="1"/><rect x="188" y="590" width="1" height="1"/><rect x="192" y="590" width="1" height="1"/><rect x="196" y="590" width="1" height="1"/><rect x="200" y="590" width="1" height="1"/><rect x="204" y="590" width="1" height="1"/><rect x="208" y="590" width="1" height="1"/><rect x="212" y="590" width="1" height="1"/><rect x="216" y="590" width="1" height="1"/></g></svg>
<div class="a" style="left:219px;top:553px;width:90px;height:19px;background:#000;"></div>
<div class="a" style="left:219px;top:572px;width:90px;height:7px;background:#181848;"></div>
<div class="a" style="left:219px;top:579px;width:90px;height:7px;background:#000;"></div>
<div class="a" style="left:219px;top:586px;width:90px;height:7px;background:#181848;"></div>
<div class="a" style="left:219px;top:593px;width:90px;height:14px;background:#0000a0;"></div>
<div class="a" style="left:219px;top:607px;width:90px;height:7px;background:#0000c8;"></div>
<div class="a" style="left:219px;top:614px;width:90px;height:6px;background:#0000ff;"></div>
<svg width="1024" height="768" style="left:0;top:0" shape-rendering="crispEdges"><g fill="#202070"><rect x="220" y="565" width="1" height="1"/><rect x="224" y="565" width="1" height="1"/><rect x="228" y="565" width="1" height="1"/><rect x="232" y="565" width="1" height="1"/><rect x="236" y="565" width="1" height="1"/><rect x="240" y="565" width="1" height="1"/><rect x="244" y="565" width="1" height="1"/><rect x="248" y="565" width="1" height="1"/><rect x="252" y="565" width="1" height="1"/><rect x="256" y="565" width="1" height="1"/><rect x="260" y="565" width="1" height="1"/><rect x="264" y="565" width="1" height="1"/><rect x="268" y="565" width="1" height="1"/><rect x="272" y="565" width="1" height="1"/><rect x="276" y="565" width="1" height="1"/><rect x="280" y="565" width="1" height="1"/><rect x="284" y="565" width="1" height="1"/><rect x="288" y="565" width="1" height="1"/><rect x="292" y="565" width="1" height="1"/><rect x="296" y="565" width="1" height="1"/><rect x="300" y="565" width="1" height="1"/><rect x="304" y="565" width="1" height="1"/><rect x="308" y="565" width="1" height="1"/><rect x="220" y="569" width="1" height="1"/><rect x="224" y="569" width="1" height="1"/><rect x="228" y="569" width="1" height="1"/><rect x="232" y="569" width="1" height="1"/><rect x="236" y="569" width="1" height="1"/><rect x="240" y="569" width="1" height="1"/><rect x="244" y="569" width="1" height="1"/><rect x="248" y="569" width="1" height="1"/><rect x="252" y="569" width="1" height="1"/><rect x="256" y="569" width="1" height="1"/><rect x="260" y="569" width="1" height="1"/><rect x="264" y="569" width="1" height="1"/><rect x="268" y="569" width="1" height="1"/><rect x="272" y="569" width="1" height="1"/><rect x="276" y="569" width="1" height="1"/><rect x="280" y="569" width="1" height="1"/><rect x="284" y="569" width="1" height="1"/><rect x="288" y="569" width="1" height="1"/><rect x="292" y="569" width="1" height="1"/><rect x="296" y="569" width="1" height="1"/><rect x="300" y="569" width="1" height="1"/><rect x="304" y="569" width="1" height="1"/><rect x="308" y="569" width="1" height="1"/><rect x="220" y="582" width="1" height="1"/><rect x="224" y="582" width="1" height="1"/><rect x="228" y="582" width="1" height="1"/><rect x="232" y="582" width="1" height="1"/><rect x="236" y="582" width="1" height="1"/><rect x="240" y="582" width="1" height="1"/><rect x="244" y="582" width="1" height="1"/><rect x="248" y="582" width="1" height="1"/><rect x="252" y="582" width="1" height="1"/><rect x="256" y="582" width="1" height="1"/><rect x="260" y="582" width="1" height="1"/><rect x="264" y="582" width="1" height="1"/><rect x="268" y="582" width="1" height="1"/><rect x="272" y="582" width="1" height="1"/><rect x="276" y="582" width="1" height="1"/><rect x="280" y="582" width="1" height="1"/><rect x="284" y="582" width="1" height="1"/><rect x="288" y="582" width="1" height="1"/><rect x="292" y="582" width="1" height="1"/><rect x="296" y="582" width="1" height="1"/><rect x="300" y="582" width="1" height="1"/><rect x="304" y="582" width="1" height="1"/><rect x="308" y="582" width="1" height="1"/></g><g fill="#0000d0"><rect x="220" y="587" width="1" height="1"/><rect x="224" y="587" width="1" height="1"/><rect x="228" y="587" width="1" height="1"/><rect x="232" y="587" width="1" height="1"/><rect x="236" y="587" width="1" height="1"/><rect x="240" y="587" width="1" height="1"/><rect x="244" y="587" width="1" height="1"/><rect x="248" y="587" width="1" height="1"/><rect x="252" y="587" width="1" height="1"/><rect x="256" y="587" width="1" height="1"/><rect x="260" y="587" width="1" height="1"/><rect x="264" y="587" width="1" height="1"/><rect x="268" y="587" width="1" height="1"/><rect x="272" y="587" width="1" height="1"/><rect x="276" y="587" width="1" height="1"/><rect x="280" y="587" width="1" height="1"/><rect x="284" y="587" width="1" height="1"/><rect x="288" y="587" width="1" height="1"/><rect x="292" y="587" width="1" height="1"/><rect x="296" y="587" width="1" height="1"/><rect x="300" y="587" width="1" height="1"/><rect x="304" y="587" width="1" height="1"/><rect x="308" y="587" width="1" height="1"/><rect x="220" y="590" width="1" height="1"/><rect x="224" y="590" width="1" height="1"/><rect x="228" y="590" width="1" height="1"/><rect x="232" y="590" width="1" height="1"/><rect x="236" y="590" width="1" height="1"/><rect x="240" y="590" width="1" height="1"/><rect x="244" y="590" width="1" height="1"/><rect x="248" y="590" width="1" height="1"/><rect x="252" y="590" width="1" height="1"/><rect x="256" y="590" width="1" height="1"/><rect x="260" y="590" width="1" height="1"/><rect x="264" y="590" width="1" height="1"/><rect x="268" y="590" width="1" height="1"/><rect x="272" y="590" width="1" height="1"/><rect x="276" y="590" width="1" height="1"/><rect x="280" y="590" width="1" height="1"/><rect x="284" y="590" width="1" height="1"/><rect x="288" y="590" width="1" height="1"/><rect x="292" y="590" width="1" height="1"/><rect x="296" y="590" width="1" height="1"/><rect x="300" y="590" width="1" height="1"/><rect x="304" y="590" width="1" height="1"/><rect x="308" y="590" width="1" height="1"/></g></svg>
<div class="a" style="left:311px;top:553px;width:91px;height:19px;background:#000;"></div>
<div class="a" style="left:311px;top:572px;width:91px;height:7px;background:#181848;"></div>
<div class="a" style="left:311px;top:579px;width:91px;height:7px;background:#000;"></div>
<div class="a" style="left:311px;top:586px;width:91px;height:7px;background:#181848;"></div>
<div class="a" style="left:311px;top:593px;width:91px;height:14px;background:#0000a0;"></div>
<div class="a" style="left:311px;top:607px;width:91px;height:7px;background:#0000c8;"></div>
<div class="a" style="left:311px;top:614px;width:91px;height:6px;background:#0000ff;"></div>
<svg width="1024" height="768" style="left:0;top:0" shape-rendering="crispEdges"><g fill="#202070"><rect x="312" y="565" width="1" height="1"/><rect x="316" y="565" width="1" height="1"/><rect x="320" y="565" width="1" height="1"/><rect x="324" y="565" width="1" height="1"/><rect x="328" y="565" width="1" height="1"/><rect x="332" y="565" width="1" height="1"/><rect x="336" y="565" width="1" height="1"/><rect x="340" y="565" width="1" height="1"/><rect x="344" y="565" width="1" height="1"/><rect x="348" y="565" width="1" height="1"/><rect x="352" y="565" width="1" height="1"/><rect x="356" y="565" width="1" height="1"/><rect x="360" y="565" width="1" height="1"/><rect x="364" y="565" width="1" height="1"/><rect x="368" y="565" width="1" height="1"/><rect x="372" y="565" width="1" height="1"/><rect x="376" y="565" width="1" height="1"/><rect x="380" y="565" width="1" height="1"/><rect x="384" y="565" width="1" height="1"/><rect x="388" y="565" width="1" height="1"/><rect x="392" y="565" width="1" height="1"/><rect x="396" y="565" width="1" height="1"/><rect x="400" y="565" width="1" height="1"/><rect x="312" y="569" width="1" height="1"/><rect x="316" y="569" width="1" height="1"/><rect x="320" y="569" width="1" height="1"/><rect x="324" y="569" width="1" height="1"/><rect x="328" y="569" width="1" height="1"/><rect x="332" y="569" width="1" height="1"/><rect x="336" y="569" width="1" height="1"/><rect x="340" y="569" width="1" height="1"/><rect x="344" y="569" width="1" height="1"/><rect x="348" y="569" width="1" height="1"/><rect x="352" y="569" width="1" height="1"/><rect x="356" y="569" width="1" height="1"/><rect x="360" y="569" width="1" height="1"/><rect x="364" y="569" width="1" height="1"/><rect x="368" y="569" width="1" height="1"/><rect x="372" y="569" width="1" height="1"/><rect x="376" y="569" width="1" height="1"/><rect x="380" y="569" width="1" height="1"/><rect x="384" y="569" width="1" height="1"/><rect x="388" y="569" width="1" height="1"/><rect x="392" y="569" width="1" height="1"/><rect x="396" y="569" width="1" height="1"/><rect x="400" y="569" width="1" height="1"/><rect x="312" y="582" width="1" height="1"/><rect x="316" y="582" width="1" height="1"/><rect x="320" y="582" width="1" height="1"/><rect x="324" y="582" width="1" height="1"/><rect x="328" y="582" width="1" height="1"/><rect x="332" y="582" width="1" height="1"/><rect x="336" y="582" width="1" height="1"/><rect x="340" y="582" width="1" height="1"/><rect x="344" y="582" width="1" height="1"/><rect x="348" y="582" width="1" height="1"/><rect x="352" y="582" width="1" height="1"/><rect x="356" y="582" width="1" height="1"/><rect x="360" y="582" width="1" height="1"/><rect x="364" y="582" width="1" height="1"/><rect x="368" y="582" width="1" height="1"/><rect x="372" y="582" width="1" height="1"/><rect x="376" y="582" width="1" height="1"/><rect x="380" y="582" width="1" height="1"/><rect x="384" y="582" width="1" height="1"/><rect x="388" y="582" width="1" height="1"/><rect x="392" y="582" width="1" height="1"/><rect x="396" y="582" width="1" height="1"/><rect x="400" y="582" width="1" height="1"/></g><g fill="#0000d0"><rect x="312" y="587" width="1" height="1"/><rect x="316" y="587" width="1" height="1"/><rect x="320" y="587" width="1" height="1"/><rect x="324" y="587" width="1" height="1"/><rect x="328" y="587" width="1" height="1"/><rect x="332" y="587" width="1" height="1"/><rect x="336" y="587" width="1" height="1"/><rect x="340" y="587" width="1" height="1"/><rect x="344" y="587" width="1" height="1"/><rect x="348" y="587" width="1" height="1"/><rect x="352" y="587" width="1" height="1"/><rect x="356" y="587" width="1" height="1"/><rect x="360" y="587" width="1" height="1"/><rect x="364" y="587" width="1" height="1"/><rect x="368" y="587" width="1" height="1"/><rect x="372" y="587" width="1" height="1"/><rect x="376" y="587" width="1" height="1"/><rect x="380" y="587" width="1" height="1"/><rect x="384" y="587" width="1" height="1"/><rect x="388" y="587" width="1" height="1"/><rect x="392" y="587" width="1" height="1"/><rect x="396" y="587" width="1" height="1"/><rect x="400" y="587" width="1" height="1"/><rect x="312" y="590" width="1" height="1"/><rect x="316" y="590" width="1" height="1"/><rect x="320" y="590" width="1" height="1"/><rect x="324" y="590" width="1" height="1"/><rect x="328" y="590" width="1" height="1"/><rect x="332" y="590" width="1" height="1"/><rect x="336" y="590" width="1" height="1"/><rect x="340" y="590" width="1" height="1"/><rect x="344" y="590" width="1" height="1"/><rect x="348" y="590" width="1" height="1"/><rect x="352" y="590" width="1" height="1"/><rect x="356" y="590" width="1" height="1"/><rect x="360" y="590" width="1" height="1"/><rect x="364" y="590" width="1" height="1"/><rect x="368" y="590" width="1" height="1"/><rect x="372" y="590" width="1" height="1"/><rect x="376" y="590" width="1" height="1"/><rect x="380" y="590" width="1" height="1"/><rect x="384" y="590" width="1" height="1"/><rect x="388" y="590" width="1" height="1"/><rect x="392" y="590" width="1" height="1"/><rect x="396" y="590" width="1" height="1"/><rect x="400" y="590" width="1" height="1"/></g></svg>
<div class="a" style="left:126px;top:552px;width:92px;height:69px;box-sizing:border-box;border:1px solid #fff;"></div>
<div class="a" style="left:131px;top:556px;width:79px;height:49px;background:#000;"></div>
<div class="a" style="left:132px;top:557px;width:77px;height:47px;background:#fff;"></div>
<div class="a t" style="left:150px;top:577px;font-size:8px;font-weight:bold;letter-spacing:-0.3px;">Trend demo</div>
<div class="a" style="left:405px;top:551px;width:30px;height:16px;border:1px solid;border-color:#fff #606060 #606060 #fff;background:#c4c4c4;"></div>
<div class="a" style="left:405px;top:569px;width:30px;height:35px;border:1px solid;border-color:#fff #606060 #606060 #fff;background:#c4c4c4;"></div>
<div class="a" style="left:405px;top:606px;width:30px;height:16px;border:1px solid;border-color:#fff #606060 #606060 #fff;background:#c4c4c4;"></div>
<svg width="1024" height="768" style="left:0;top:0"><polygon points="421,556.5 427.5,563 414.5,563" fill="#a0a0a0"/><line x1="415" y1="563.5" x2="427" y2="563.5" stroke="#fff"/><polygon points="414.5,611.5 427.5,611.5 421,618" fill="#a0a0a0"/><line x1="421" y1="618" x2="427.5" y2="611.5" stroke="#fff"/></svg>
<svg width="1024" height="768" style="left:0;top:0" shape-rendering="crispEdges"><rect x="407" y="577" width="28" height="22" fill="#c8c8c8"/><path d="M407.5,599 V577.5 H435" stroke="#808080" fill="none"/><path d="M407,598.5 H434.5 V577" stroke="#fff" fill="none"/><rect x="408.5" y="578.5" width="7" height="5" fill="#00a000" stroke="#000"/><rect x="415.5" y="578.5" width="18" height="5" fill="none" stroke="#e00000"/><path d="M408,591.5 H434 M408,584.5 H434 M416.5,584 V598 M425.5,584 V598" stroke="#202020" stroke-dasharray="1,1"/></svg>
<svg width="1024" height="768" style="left:0;top:0"><polygon points="660,573 660,560 665,555 765,555 770,560 770,573" fill="#c4c4c4"/><polyline points="660.5,573 660.5,560 665.5,555.5 764.5,555.5" fill="none" stroke="#fff"/><polyline points="764.5,555.5 769.5,560.5 769.5,573" fill="none" stroke="#606060"/><line x1="660" y1="572.5" x2="770" y2="572.5" stroke="#606060"/><line x1="660" y1="573.5" x2="770" y2="573.5" stroke="#fff"/></svg>
<svg width="1024" height="768" style="left:0;top:0"><polygon points="770,573 770,560 775,555 795,555 795,573" fill="#c4c4c4"/><polyline points="770.5,573 770.5,560 775.5,555.5 795,555.5" fill="none" stroke="#fff"/><line x1="770" y1="572.5" x2="852" y2="572.5" stroke="#606060"/><line x1="770" y1="573.5" x2="852" y2="573.5" stroke="#fff"/></svg>
<svg width="1024" height="768" style="left:0;top:0"><polygon points="549,573 549,560 554,555 655,555 660,560 660,573" fill="#c4c4c4"/><polyline points="549.5,573 549.5,560 554.5,555.5 654.5,555.5" fill="none" stroke="#fff"/><polyline points="654.5,555.5 659.5,560.5 659.5,573" fill="none" stroke="#606060"/><line x1="549" y1="572.5" x2="660" y2="572.5" stroke="#606060"/><line x1="549" y1="573.5" x2="660" y2="573.5" stroke="#fff"/></svg>
<svg width="1024" height="768" style="left:0;top:0"><polygon points="440,573 440,560 445,555 544,555 549,560 549,573" fill="#c4c4c4"/><polyline points="440.5,573 440.5,560 445.5,555.5 543.5,555.5" fill="none" stroke="#fff"/><polyline points="543.5,555.5 548.5,560.5 548.5,573" fill="none" stroke="#606060"/></svg>
<div class="a t" style="left:463px;top:559px;font-size:11px;font-weight:bold;letter-spacing:-0.3px;">Applications</div>
<div class="a t" style="left:585px;top:559px;font-size:11.3px;">Utilities</div>
<div class="a t" style="left:698px;top:559px;font-size:11px;letter-spacing:-0.4px;">Demos</div>
<div class="a" style="left:791px;top:549px;width:88px;height:23px;background:#c4c4c4;"></div>
<svg width="1024" height="768" style="left:0;top:0"><polygon points="801,552 809,559.5 801,567" fill="#ffff00"/><rect x="821.5" y="554.5" width="36" height="14" fill="#fff" stroke="#000" stroke-width="1.5"/><rect x="851" y="557" width="4" height="4" fill="#00a040"/><path d="M825,558 h5 M825,561 h7 M825,564 h4 M836,563 h12 M836,565.5 h10" stroke="#000"/><path d="M836,549 q6,0 10,6 l-4,6" fill="#fff" stroke="#000"/></svg>
<div class="a" style="left:440px;top:573px;width:412px;height:51px;box-sizing:border-box;border:1px solid;border-color:#fff #606060 #606060 #fff;background:#c4c4c4;"></div>
<div class="a" style="left:440px;top:573px;width:1px;height:51px;background:#fff;"></div>
<div class="a" style="left:441px;top:575px;width:48px;height:46px;border:1px solid;border-color:#fff #606060 #606060 #fff;background:#c4c4c4;"></div>
<div class="a" style="left:443px;top:577px;width:44px;height:44px;background:#a8a8a8;"></div>
<div class="a" style="left:491px;top:575px;width:48px;height:46px;border:1px solid;border-color:#fff #606060 #606060 #fff;background:#c4c4c4;"></div>
<div class="a" style="left:493px;top:577px;width:44px;height:44px;background:#a8a8a8;"></div>
<div class="a" style="left:541px;top:575px;width:48px;height:46px;border:1px solid;border-color:#fff #606060 #606060 #fff;background:#c4c4c4;"></div>
<div class="a" style="left:543px;top:577px;width:44px;height:44px;background:#a8a8a8;"></div>
<div class="a" style="left:591px;top:575px;width:48px;height:46px;border:1px solid;border-color:#fff #606060 #606060 #fff;background:#c4c4c4;"></div>
<div class="a" style="left:593px;top:577px;width:44px;height:44px;background:#a8a8a8;"></div>
<div class="a" style="left:641px;top:575px;width:48px;height:46px;border:1px solid;border-color:#fff #606060 #606060 #fff;background:#c4c4c4;"></div>
<div class="a" style="left:643px;top:577px;width:44px;height:44px;background:#a8a8a8;"></div>
<svg width="1024" height="768" style="left:0;top:0"><polygon points="444,606 467,618 486,606 486,611 470,622 444,610" fill="#000"/><polygon points="444.5,582.5 454,577.5 485,585 469.5,594" fill="#a0a0a0" stroke="#e0e0e0" stroke-width="1"/><line x1="455" y1="580" x2="481" y2="586" stroke="#c8c8c8"/><polygon points="444.5,582.5 469.5,594 469.5,619 444.5,606" fill="#d0d0d0"/><polyline points="444.5,606 444.5,582.5 469.5,594" fill="none" stroke="#f0f0f0"/><polygon points="446.5,586 467,595.5 467,614.5 446.5,603.5" fill="#0000f0"/><polygon points="469.5,594 485,585 485,607 469.5,619" fill="#707070"/><line x1="477.5" y1="590" x2="477.5" y2="612" stroke="#a0a0a0"/><path d="M447,608 L467,618.5" stroke="#8000a0" stroke-width="1"/><text x="447.5" y="599" font-size="11" fill="#fff" font-family="Liberation Sans" transform="rotate(8 450 594)">$</text></svg>
<svg width="1024" height="768" style="left:0;top:0"><polygon points="497,611 510,618 534,612 534,608 510,614 497,607" fill="#000"/><polygon points="494.5,583 500,578 500,612 494.5,607" fill="#f0f0f0"/><polygon points="498,584 503,578 503,611 498,616" fill="#0000b0"/><rect x="498" y="584" width="6" height="30" fill="#0000c0"/><polygon points="498,584 508,578 512,578 503,585" fill="#f0f0ff"/><rect x="505" y="587" width="5" height="30" fill="#00d040"/><polygon points="505,587 514,580 518,580 510,587" fill="#e0ffe0"/><rect x="510" y="588" width="7" height="30" fill="#8000c0"/><polygon points="510,588 520,581 534,580 517,590" fill="#f0f0f0"/><polygon points="517,590 534,580 534,610 517,618" fill="#7000b0"/><line x1="517.5" y1="590" x2="517.5" y2="618" stroke="#c0c0ff"/><text x="527" y="619" text-anchor="middle" font-size="33" font-weight="bold" font-family="Liberation Sans" fill="#000" stroke="#000" stroke-width="2.5">?</text><text x="527" y="619" text-anchor="middle" font-size="33" font-weight="bold" font-family="Liberation Sans" fill="#ffb000">?</text></svg>
<svg width="1024" height="768" style="left:0;top:0"><path d="M543,584 l14,-5 M543,592 l43,-15 M543,600 l43,-15 M543,608 l43,-15 M543,616 l43,-15 M550,621 l36,-13" stroke="#808080" stroke-width="1"/><polygon points="557,610 586,611 586,620 557,620" fill="#000"/><polygon points="555,582.5 564.5,577.5 574,582.5 564.5,587.5" fill="#c8c8ff" stroke="#fff" stroke-width="0.8"/><polygon points="555,582.5 564.5,587.5 564.5,600 555,595" fill="#0000e0" stroke="#fff" stroke-width="0.8"/><polygon points="564.5,587.5 574,582.5 574,595 564.5,600" fill="#0000a0" stroke="#fff" stroke-width="0.8"/><text x="556.5" y="594" font-size="10" font-weight="bold" font-family="Liberation Sans" fill="#fff">P</text><text x="566" y="595" font-size="9" font-weight="bold" font-family="Liberation Sans" fill="#fff">h</text><polygon points="546.5,601 556,596 565.5,601 556,606" fill="#c8c8ff" stroke="#fff" stroke-width="0.8"/><polygon points="546.5,601 556,606 556,620 546.5,615" fill="#ff0000" stroke="#fff" stroke-width="0.8"/><polygon points="556,606 565.5,601 565.5,615 556,620" fill="#800030" stroke="#fff" stroke-width="0.8"/><text x="548" y="615" font-size="10" font-weight="bold" font-family="Liberation Sans" fill="#fff">A</text><polygon points="565.5,601 575,596 584.5,601 575,606" fill="#c0c0d0" stroke="#fff" stroke-width="0.8"/><polygon points="565.5,601 575,606 575,620 565.5,615" fill="#00a000" stroke="#fff" stroke-width="0.8"/><polygon points="575,606 584.5,601 584.5,615 575,620" fill="#507000" stroke="#fff" stroke-width="0.8"/><text x="567" y="615" font-size="10" font-weight="bold" font-family="Liberation Sans" fill="#fff">B</text></svg>
<svg width="1024" height="768" style="left:0;top:0"><path d="M593,586 l12,-5 M593,594 l43,-15 M593,602 l43,-15 M593,610 l43,-15 M593,618 l43,-15 M603,621 l33,-11" stroke="#808080" stroke-width="1"/><ellipse cx="614" cy="616" rx="9" ry="3" fill="#000"/><polygon points="602,577 620,586 621,608 612,617 596,606 601,598" fill="#ffff00" stroke="#606000" stroke-width="0.7"/><text x="0" y="0" font-size="12" font-family="Liberation Sans" fill="#000" transform="translate(603,588) rotate(70) scale(1,1)" style="display:none">Note</text><text x="0" y="0" font-size="14" font-family="Liberation Sans" fill="#000" transform="translate(602,591) skewY(48)" textLength="19" lengthAdjust="spacingAndGlyphs">Note</text><polygon points="622,596 629,596 629,591 636,601 629,611 629,606 622,606" fill="#fff" stroke="#000" stroke-width="0.7"/></svg>
<svg width="1024" height="768" style="left:0;top:0"><rect x="643" y="577" width="43" height="43" fill="#606060"/><polygon points="654,577 675,577 686,588 686,609 675,620 654,620 643,609 643,588" fill="#000"/><path d="M654,577 L643,588 M675,577 L686,588 M643,609 L654,620 M686,609 L675,620" stroke="#0000c0" stroke-width="1"/><path d="M657,579 L651,585 M676,587 L686,596 M643,605 L650,612 M672,620 L679,614" stroke="#fff" stroke-width="0.8"/><circle cx="664.7" cy="598.7" r="17" fill="none" stroke="#0000c0" stroke-width="1.2"/><circle cx="664.7" cy="598.7" r="15.8" fill="none" stroke="#a0a0a0" stroke-width="1"/><circle cx="664.7" cy="598.7" r="14.7" fill="none" stroke="#0000c0" stroke-width="1"/><text x="650" y="603" font-size="10.5" font-family="Liberation Sans" fill="#fff" textLength="32" lengthAdjust="spacingAndGlyphs">Node ?</text><g fill="#ffff00"><rect x="645" y="579" width="2" height="2"/><rect x="682" y="579" width="2" height="2"/><rect x="645" y="616" width="2" height="2"/><rect x="682" y="616" width="2" height="2"/><rect x="648" y="582" width="2" height="2"/><rect x="679" y="582" width="2" height="2"/><rect x="648" y="613" width="2" height="2"/><rect x="679" y="613" width="2" height="2"/><rect x="651" y="585" width="2" height="2"/><rect x="676" y="585" width="2" height="2"/><rect x="651" y="610" width="2" height="2"/><rect x="676" y="610" width="2" height="2"/><rect x="654" y="589" width="1" height="1"/><rect x="656" y="591" width="1" height="1"/><rect x="674" y="589" width="1" height="1"/><rect x="672" y="591" width="1" height="1"/><rect x="654" y="608" width="1" height="1"/><rect x="656" y="606" width="1" height="1"/><rect x="674" y="608" width="1" height="1"/><rect x="672" y="606" width="1" height="1"/></g></svg>
<div class="a" style="left:854px;top:573px;width:19px;height:20px;border:1px solid;border-color:#fff #606060 #606060 #fff;background:#c4c4c4;"></div>
<div class="a" style="left:854px;top:598px;width:19px;height:21px;border:1px solid;border-color:#fff #606060 #606060 #fff;background:#c4c4c4;"></div>
<svg width="1024" height="768" style="left:0;top:0"><polygon points="858,584 864,578 864,582 871,582 871,587 864,587 864,590" fill="#a0a0a0"/><polygon points="871,609 865,603 865,607 858,607 858,611 865,611 865,615" fill="#a0a0a0"/><path d="M858,610 h8 M865,615 l6,-6" stroke="#000" stroke-width="1"/></svg>
<div class="a" style="left:79px;top:628px;width:800px;height:33px;background:#c4c4c4;"></div>
<div class="a" style="left:79px;top:629px;width:800px;height:1px;background:#fff;"></div>
<div class="a" style="left:79px;top:632px;width:36px;height:25px;border:2px solid;border-color:#fff #606060 #606060 #fff;background:#c4c4c4;"></div>
<div class="a t" style="left:83px;top:642px;font-size:12px;letter-spacing:0.5px;">PWM</div>
<div class="a" style="left:121px;top:632px;width:96px;height:25px;border:2px solid;border-color:#fff #606060 #606060 #fff;background:#c4c4c4;"></div>
<svg width="1024" height="768" style="left:0;top:0" shape-rendering="crispEdges"><rect x="127" y="639" width="14" height="14" fill="#000"/><rect x="128" y="640" width="3" height="3" fill="#555"/><rect x="132" y="640" width="3" height="3" fill="#555"/><rect x="136" y="640" width="3" height="3" fill="#aaa"/><rect x="128" y="644" width="3" height="3" fill="#555"/><rect x="132" y="644" width="3" height="3" fill="#aaa"/><rect x="136" y="644" width="3" height="3" fill="#555"/><rect x="128" y="648" width="3" height="3" fill="#aaa"/><rect x="132" y="648" width="3" height="3" fill="#555"/><rect x="136" y="648" width="3" height="3" fill="#aaa"/></svg>
<div class="a t" style="left:145px;top:642px;font-size:12px;letter-spacing:0.35px;">Photon Desk</div>
<div class="a" style="left:223px;top:632px;width:96px;height:26px;border:2px solid;border-color:#606060 #fff #fff #606060;background:#a8a8a8;"></div>
<div class="a" style="left:229px;top:640px;width:13px;height:13px;border:1px solid;border-color:#fff #808080 #808080 #fff;background:#c4c4c4;"></div>
<div class="a t" style="left:247px;top:643px;font-size:12px;letter-spacing:0.25px;">Trend demo</div>
<div class="a" style="left:810px;top:633px;width:62px;height:24px;border:2px solid;border-color:#606060 #fff #fff #606060;background:#c4c4c4;"></div>
<div class="a t" style="left:818px;top:643px;font-size:12px;letter-spacing:0.45px;">03:33 PM</div>
<div class="a" style="left:895px;top:7px;width:122px;height:18px;background:#d4d4d4;"></div>
<div class="a" style="left:895px;top:23px;width:122px;height:2px;background:#808080;"></div>
<div class="a" style="left:895px;top:7px;width:122px;height:1px;background:#e4e4e4;"></div>
<div class="a" style="left:895px;top:7px;width:1px;height:17px;background:#e4e4e4;"></div>
<div class="a" style="left:1016px;top:7px;width:1px;height:18px;background:#808080;"></div>
<div class="a" style="left:912px;top:7px;width:1px;height:17px;background:#808080;"></div>
<div class="a" style="left:913px;top:7px;width:1px;height:17px;background:#e8e8e8;"></div>
<div class="a" style="left:980px;top:7px;width:1px;height:17px;background:#808080;"></div>
<div class="a" style="left:981px;top:7px;width:1px;height:17px;background:#e8e8e8;"></div>
<div class="a" style="left:998px;top:7px;width:1px;height:17px;background:#808080;"></div>
<div class="a" style="left:999px;top:7px;width:1px;height:17px;background:#e8e8e8;"></div>
<div class="a" style="left:899px;top:14px;width:10px;height:4px;box-sizing:border-box;border:1px solid #808080;background:#ececec;"></div>
<div class="a" style="left:988px;top:14px;width:4px;height:4px;box-sizing:border-box;border:1px solid #808080;background:#ececec;"></div>
<div class="a" style="left:1002px;top:11px;width:10px;height:10px;box-sizing:border-box;border:1px solid #808080;background:#ececec;"></div>
<div class="a t" style="left:927px;top:9.5px;font-size:12px;font-weight:bold;">oclock</div>
<svg width="1024" height="768" style="left:0;top:0"><circle cx="956.5" cy="85.7" r="56.3" fill="none" stroke="#000" stroke-width="6" shape-rendering="crispEdges"/><ellipse cx="957" cy="35.5" rx="2" ry="1.5" fill="#0000ff"/><polyline points="980.5,92.5 955.5,85 942.5,128" fill="none" stroke="#0000ff" stroke-width="6" stroke-linejoin="miter" stroke-linecap="round" shape-rendering="crispEdges"/></svg>
<div class="a" style="left:908px;top:150px;width:116px;height:133px;background:#d4d4d4;"></div>
<div class="a" style="left:908px;top:150px;width:116px;height:1px;background:#b0b0b0;"></div>
<div class="a" style="left:908px;top:150px;width:1px;height:133px;background:#b0b0b0;"></div>
<div class="a" style="left:1022px;top:150px;width:2px;height:133px;background:#808080;"></div>
<div class="a" style="left:908px;top:281px;width:116px;height:2px;background:#808080;"></div>
<div class="a" style="left:914px;top:156px;width:104px;height:121px;box-sizing:border-box;border:1px solid #808080;"></div>
<div class="a" style="left:932px;top:151px;width:1px;height:5px;background:#808080;"></div>
<div class="a" style="left:933px;top:151px;width:1px;height:5px;background:#e8e8e8;"></div>
<div class="a" style="left:932px;top:276px;width:1px;height:5px;background:#808080;"></div>
<div class="a" style="left:933px;top:276px;width:1px;height:5px;background:#e8e8e8;"></div>
<div class="a" style="left:998px;top:151px;width:1px;height:5px;background:#808080;"></div>
<div class="a" style="left:999px;top:151px;width:1px;height:5px;background:#e8e8e8;"></div>
<div class="a" style="left:998px;top:276px;width:1px;height:5px;background:#808080;"></div>
<div class="a" style="left:999px;top:276px;width:1px;height:5px;background:#e8e8e8;"></div>
<div class="a" style="left:909px;top:174px;width:5px;height:1px;background:#808080;"></div>
<div class="a" style="left:909px;top:175px;width:5px;height:1px;background:#e8e8e8;"></div>
<div class="a" style="left:1017px;top:174px;width:5px;height:1px;background:#808080;"></div>
<div class="a" style="left:1017px;top:175px;width:5px;height:1px;background:#e8e8e8;"></div>
<div class="a" style="left:909px;top:257px;width:5px;height:1px;background:#808080;"></div>
<div class="a" style="left:909px;top:258px;width:5px;height:1px;background:#e8e8e8;"></div>
<div class="a" style="left:1017px;top:257px;width:5px;height:1px;background:#808080;"></div>
<div class="a" style="left:1017px;top:258px;width:5px;height:1px;background:#e8e8e8;"></div>
<div class="a" style="left:915px;top:157px;width:102px;height:18px;background:#d4d4d4;"></div>
<div class="a" style="left:915px;top:173px;width:102px;height:2px;background:#808080;"></div>
<div class="a" style="left:915px;top:157px;width:102px;height:1px;background:#e4e4e4;"></div>
<div class="a" style="left:915px;top:157px;width:1px;height:17px;background:#e4e4e4;"></div>
<div class="a" style="left:1016px;top:157px;width:1px;height:18px;background:#808080;"></div>
<div class="a" style="left:932px;top:157px;width:1px;height:17px;background:#808080;"></div>
<div class="a" style="left:933px;top:157px;width:1px;height:17px;background:#e8e8e8;"></div>
<div class="a" style="left:980px;top:157px;width:1px;height:17px;background:#808080;"></div>
<div class="a" style="left:981px;top:157px;width:1px;height:17px;background:#e8e8e8;"></div>
<div class="a" style="left:998px;top:157px;width:1px;height:17px;background:#808080;"></div>
<div class="a" style="left:999px;top:157px;width:1px;height:17px;background:#e8e8e8;"></div>
<div class="a" style="left:919px;top:164px;width:10px;height:4px;box-sizing:border-box;border:1px solid #808080;background:#ececec;"></div>
<div class="a" style="left:988px;top:164px;width:4px;height:4px;box-sizing:border-box;border:1px solid #808080;background:#ececec;"></div>
<div class="a" style="left:1002px;top:161px;width:10px;height:10px;box-sizing:border-box;border:1px solid #808080;background:#ececec;"></div>
<div class="a t" style="left:941px;top:159.5px;font-size:12px;font-weight:bold;">xlogo</div>
<div class="a" style="left:915px;top:175px;width:102px;height:101px;background:#fff;"></div>
<svg width="1024" height="768" style="left:0;top:0" shape-rendering="crispEdges"><polygon points="1016,175 995,175 916,275 937,275" fill="#000"/><polygon points="926,275 966,225 977,225 937,275" fill="#fff"/><polygon points="1006,175 966,225 955,225 995,175" fill="#fff"/><polygon points="916,175 941,175 1016,275 991,275" fill="#000"/><polygon points="1007,175 1004,175 925,275 928,275" fill="#fff"/></svg>
<div class="a" style="left:934px;top:291px;width:88px;height:81px;background:#d4d4d4;"></div>
<div class="a" style="left:934px;top:291px;width:88px;height:1px;background:#b0b0b0;"></div>
<div class="a" style="left:934px;top:291px;width:1px;height:81px;background:#b0b0b0;"></div>
<div class="a" style="left:1020px;top:291px;width:2px;height:81px;background:#808080;"></div>
<div class="a" style="left:934px;top:370px;width:88px;height:2px;background:#808080;"></div>
<div class="a" style="left:940px;top:297px;width:76px;height:69px;box-sizing:border-box;border:1px solid #808080;"></div>
<div class="a" style="left:958px;top:292px;width:1px;height:5px;background:#808080;"></div>
<div class="a" style="left:959px;top:292px;width:1px;height:5px;background:#e8e8e8;"></div>
<div class="a" style="left:958px;top:365px;width:1px;height:5px;background:#808080;"></div>
<div class="a" style="left:959px;top:365px;width:1px;height:5px;background:#e8e8e8;"></div>
<div class="a" style="left:996px;top:292px;width:1px;height:5px;background:#808080;"></div>
<div class="a" style="left:997px;top:292px;width:1px;height:5px;background:#e8e8e8;"></div>
<div class="a" style="left:996px;top:365px;width:1px;height:5px;background:#808080;"></div>
<div class="a" style="left:997px;top:365px;width:1px;height:5px;background:#e8e8e8;"></div>
<div class="a" style="left:935px;top:315px;width:5px;height:1px;background:#808080;"></div>
<div class="a" style="left:935px;top:316px;width:5px;height:1px;background:#e8e8e8;"></div>
<div class="a" style="left:1015px;top:315px;width:5px;height:1px;background:#808080;"></div>
<div class="a" style="left:1015px;top:316px;width:5px;height:1px;background:#e8e8e8;"></div>
<div class="a" style="left:935px;top:346px;width:5px;height:1px;background:#808080;"></div>
<div class="a" style="left:935px;top:347px;width:5px;height:1px;background:#e8e8e8;"></div>
<div class="a" style="left:1015px;top:346px;width:5px;height:1px;background:#808080;"></div>
<div class="a" style="left:1015px;top:347px;width:5px;height:1px;background:#e8e8e8;"></div>
<div class="a" style="left:941px;top:298px;width:74px;height:18px;background:#d4d4d4;"></div>
<div class="a" style="left:941px;top:314px;width:74px;height:2px;background:#808080;"></div>
<div class="a" style="left:941px;top:298px;width:74px;height:1px;background:#e4e4e4;"></div>
<div class="a" style="left:941px;top:298px;width:1px;height:17px;background:#e4e4e4;"></div>
<div class="a" style="left:1014px;top:298px;width:1px;height:18px;background:#808080;"></div>
<div class="a" style="left:958px;top:298px;width:1px;height:17px;background:#808080;"></div>
<div class="a" style="left:959px;top:298px;width:1px;height:17px;background:#e8e8e8;"></div>
<div class="a" style="left:978px;top:298px;width:1px;height:17px;background:#808080;"></div>
<div class="a" style="left:979px;top:298px;width:1px;height:17px;background:#e8e8e8;"></div>
<div class="a" style="left:996px;top:298px;width:1px;height:17px;background:#808080;"></div>
<div class="a" style="left:997px;top:298px;width:1px;height:17px;background:#e8e8e8;"></div>
<div class="a" style="left:945px;top:305px;width:10px;height:4px;box-sizing:border-box;border:1px solid #808080;background:#ececec;"></div>
<div class="a" style="left:986px;top:305px;width:4px;height:4px;box-sizing:border-box;border:1px solid #808080;background:#ececec;"></div>
<div class="a" style="left:1000px;top:302px;width:10px;height:10px;box-sizing:border-box;border:1px solid #808080;background:#ececec;"></div>
<div class="a t" style="left:960px;top:300.5px;font-size:12px;font-weight:bold;">xbi</div>
<div class="a" style="left:941px;top:316px;width:73px;height:49px;background:#fff;"></div>
<svg width="1024" height="768" style="left:0;top:0" fill="none" stroke="#000" stroke-width="1.3"><path d="M964,352 V336 Q964,329 971,329 Q979,329 979,336 V352 Z" fill="#fff"/><path d="M971,329 L980,321 Q988,319 989,327 V343 L979,352"/><path d="M979,336 L989,327"/><path d="M968,336 h4 l-2,1 z"/><path d="M954,340.5 h7 M991,340.5 h11"/><path d="M973,352 V362 M977,352 V362 M983,347 V362"/><path d="M984,338 L993,330 V326 L997,325 L996,334 L993,331" fill="#000"/><path d="M954,362 h48" stroke-dasharray="2,1"/></svg>
<div class="a" style="left:5px;top:684px;width:62px;height:79px;background:#d4d4d4;"></div>
<div class="a" style="left:5px;top:684px;width:62px;height:1px;background:#b0b0b0;"></div>
<div class="a" style="left:5px;top:684px;width:1px;height:79px;background:#b0b0b0;"></div>
<div class="a" style="left:65px;top:684px;width:2px;height:79px;background:#808080;"></div>
<div class="a" style="left:5px;top:761px;width:62px;height:2px;background:#808080;"></div>
<div class="a" style="left:9px;top:688px;width:54px;height:54px;box-sizing:border-box;border:1px solid;border-color:#808080 #f0f0f0 #f0f0f0 #808080;"></div>
<div class="a" style="left:6px;top:744px;width:59px;height:1px;background:#808080;"></div>
<div class="a" style="left:6px;top:745px;width:59px;height:1px;background:#f0f0f0;"></div>
<div class="a" style="left:16px;top:695px;width:16px;height:16px;background:#000;"></div>
<svg width="1024" height="768" style="left:0;top:0"><polygon points="33,695 35,693 35,712 33,712" fill="#000"/><polygon points="16,712 33,712 35,714 14,714" fill="#000"/></svg>
<div class="a" style="left:40px;top:695px;width:16px;height:16px;background:repeating-conic-gradient(#000 0 25%, #c8c8c8 0 50%) 0 0/2px 2px;"></div>
<svg width="1024" height="768" style="left:0;top:0"><polygon points="57,695 59,693 59,712 57,712" fill="#000"/><polygon points="40,712 57,712 59,714 38,714" fill="#000"/></svg>
<div class="a" style="left:16px;top:719px;width:16px;height:16px;background:repeating-conic-gradient(#000 0 25%, #c8c8c8 0 50%) 0 0/2px 2px;"></div>
<svg width="1024" height="768" style="left:0;top:0"><polygon points="33,719 35,717 35,736 33,736" fill="#000"/><polygon points="16,736 33,736 35,738 14,738" fill="#000"/></svg>
<div class="a" style="left:40px;top:719px;width:16px;height:16px;background:#000;"></div>
<svg width="1024" height="768" style="left:0;top:0"><polygon points="57,719 59,717 59,736 57,736" fill="#000"/><polygon points="40,736 57,736 59,738 38,738" fill="#000"/></svg>
<div class="a t" style="left:22px;top:747px;font-size:13px;">xqsh</div>
</body></html>
